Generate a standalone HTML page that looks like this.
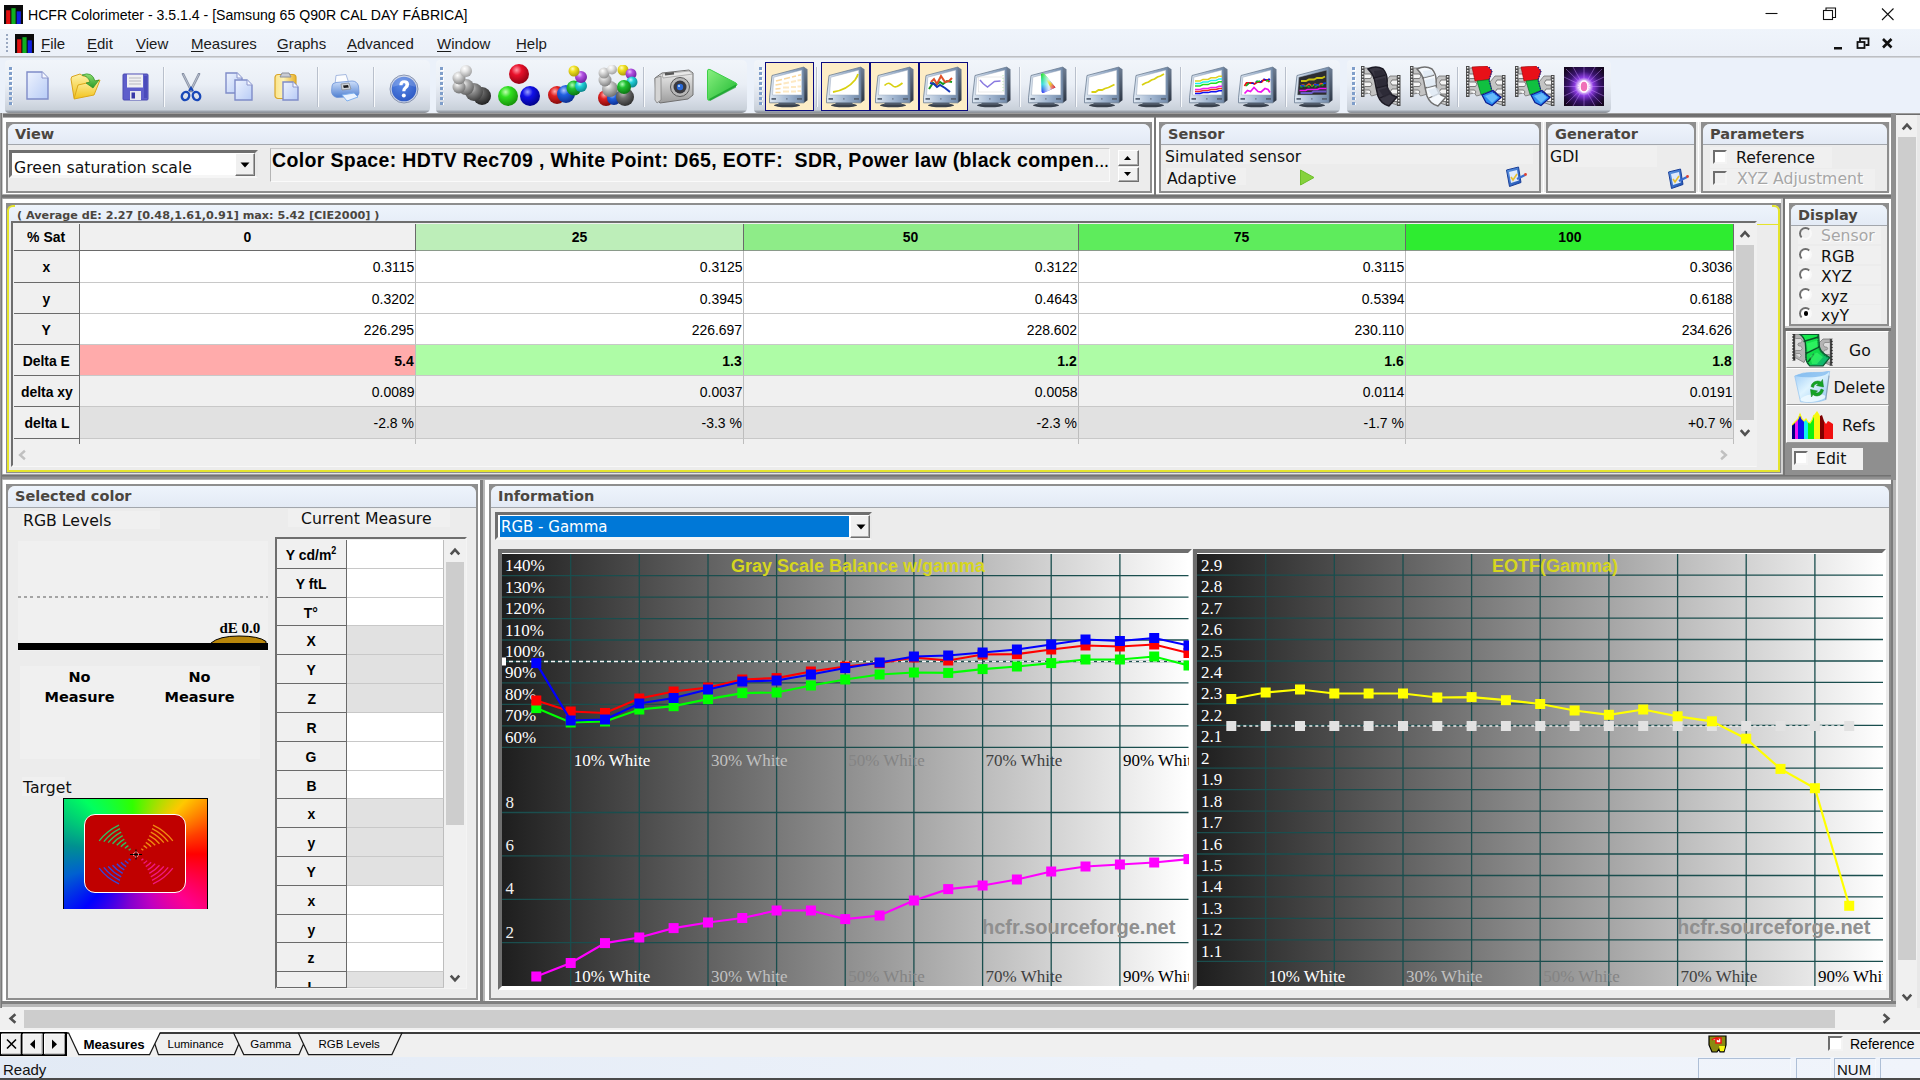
<!DOCTYPE html>
<html lang="en">
<head>
<meta charset="utf-8">
<title>HCFR Colorimeter - 3.5.1.4 - [Samsung 65 Q90R CAL DAY FÁBRICA]</title>
<style>
*{box-sizing:border-box;margin:0;padding:0}
html,body{width:1920px;height:1080px;overflow:hidden;background:#f0f0f0}
body{position:relative;font-family:"Liberation Sans",sans-serif;font-size:15px;color:#000}
.a{position:absolute}
.dv{font-family:"DejaVu Sans","Liberation Sans",sans-serif}
.sx{display:inline-block;transform-origin:0 50%;white-space:nowrap}
u{text-decoration:underline;text-underline-offset:2px}
/* title */
#title{left:0;top:0;width:1920px;height:29px;background:#fff}
#title .t{left:28px;top:5px;font-size:15.5px;line-height:19px;transform:scaleX(.91);transform-origin:0 50%;white-space:nowrap;letter-spacing:0}
/* menu */
#menu{left:0;top:29px;width:1920px;height:27px;background:linear-gradient(#eff4fb,#ebf0f8)}
#menu .m{top:5px;font-size:15px;line-height:19px;white-space:nowrap;color:#1a1a1a}
#menuline{left:0;top:56px;width:1920px;height:2px;background:linear-gradient(#bcbfc4 0 1px,#d2d4d8 1px 2px)}
/* toolbar */
#tbbg{left:0;top:58px;width:1920px;height:55px;background:#ebf1fa}
.band{top:60px;height:53px;border-radius:4px 5px 5px 4px;background:linear-gradient(#f1f5fa 0,#eaeff6 24px,#d6dce6 41px,#c8d0d9 50px,#a0a8b2 51px,#8a8e94 53px)}
.grip{top:66.500px;width:2.500px;height:40px;background:repeating-linear-gradient(#7f9eca 0 2.500px,transparent 2.500px 5px)}
.grip2{top:67.500px;width:2.500px;height:40px;background:repeating-linear-gradient(#fff 0 2.500px,transparent 2.500px 5px)}
.tsep{top:67px;width:2px;height:40px;background:linear-gradient(90deg,#b9c0cc 0 1px,#f8fafc 1px 2px)}
.sel{top:62px;width:49px;height:49px;background:#fdedc6;border:1.500px solid #0a0a80}
#tbline{left:0;top:113px;width:1920px;height:5px;background:linear-gradient(#9c9c9c 0 1px,#6c6c6c 1px,#747474 4px,#b0b0b0 4px 5px)}
/* frames */
.pnl{border:2px solid #8e8e8e;border-right-color:#8e8e8e;background:#ececec;border-radius:7px 7px 0 0}
.pnl .hd{left:0;top:0;right:0;height:20px;background:#e5ecf6;border-bottom:1px solid #9aa0a8;border-radius:5px 5px 0 0}
.pnl .hd span{position:absolute;left:6px;top:1px;font:bold 14.5px/18px "DejaVu Sans","Liberation Sans",sans-serif;color:#4a4540;white-space:nowrap}
.lab{font:15.7px/19px "DejaVu Sans","Liberation Sans",sans-serif;white-space:nowrap;color:#111;margin-top:2px}
.cb{width:14px;height:14px;background:#fff;border:2px solid;border-color:#6e6e6e #f4f4f4 #f4f4f4 #6e6e6e}
.rd{width:13px;height:13px;border-radius:50%;background:#fff;border:2px solid;border-color:#6e6e6e #f8f8f8 #f8f8f8 #6e6e6e}
/* grid */
.g{position:absolute;font-size:15.5px;line-height:32px;white-space:nowrap;overflow:hidden}
.gh{background:#f0f0f0;text-align:center;font-weight:bold;border-right:1px solid #6a6a6a;border-bottom:1px solid #6a6a6a}
.gv{text-align:right;border-right:1px solid #bdbdbd;border-bottom:1px solid #c8c8c8}
.g span{display:inline-block;transform:scaleX(.9)}
.gv span{transform-origin:100% 50%;padding-right:1px}
.gh span{transform-origin:50% 50%}
</style>
</head>
<body>

<div id="title" class="a"><svg class="a" style="left:4px;top:5px" width="19" height="19" viewBox="0 0 18 18"><rect width="18" height="18" fill="#0b0b0b"/><rect x="2" y="5" width="4" height="13" fill="#e01010"/><rect x="7" y="3" width="4" height="15" fill="#10b020"/><rect x="12" y="6" width="4" height="12" fill="#1020e0"/></svg><div class="a t">HCFR Colorimeter - 3.5.1.4 - [Samsung 65 Q90R CAL DAY FÁBRICA]</div>
<svg class="a" style="left:1750px;top:0" width="170" height="29" viewBox="0 0 170 29" fill="none" stroke="#111" stroke-width="1.100"><path d="M15.500 13.500h12"/><rect x="73.500" y="10.500" width="9" height="9"/><path d="M76 10.500v-2.500h9.500v9.500h-3"/><path d="M132 8.500l11.500 11.500M143.500 8.500l-11.500 11.500"/></svg></div>
<div id="menu" class="a">
<div class="a" style="left:6px;top:5px;width:2px;height:18px;background:repeating-linear-gradient(#9aa8c0 0 2px,transparent 2px 4px)"></div>
<svg class="a" style="left:15px;top:5px" width="19" height="19" viewBox="0 0 18 18"><rect width="18" height="18" fill="#0b0b0b"/><rect x="2" y="5" width="4" height="13" fill="#e01010"/><rect x="7" y="3" width="4" height="15" fill="#10b020"/><rect x="12" y="6" width="4" height="12" fill="#1020e0"/></svg>
<div class="a m" style="left:41px"><u>F</u>ile</div>
<div class="a m" style="left:87px"><u>E</u>dit</div>
<div class="a m" style="left:136px"><u>V</u>iew</div>
<div class="a m" style="left:191px"><u>M</u>easures</div>
<div class="a m" style="left:277px"><u>G</u>raphs</div>
<div class="a m" style="left:347px"><u>A</u>dvanced</div>
<div class="a m" style="left:437px"><u>W</u>indow</div>
<div class="a m" style="left:516px"><u>H</u>elp</div>
<svg class="a" style="left:1828px;top:6px" width="70" height="18" viewBox="0 0 70 18"><rect x="6" y="12" width="8" height="2.500" fill="#111"/><g fill="none" stroke="#111" stroke-width="1.800"><rect x="29.500" y="7" width="7" height="6"/><path d="M32 6.500v-3h8.500v6.500h-3"/></g><path d="M55 4l8.500 8.500M63.500 4l-8.500 8.500" stroke="#111" stroke-width="2.600"/></svg>
</div><div id="menuline" class="a"></div>
<div id="tbbg" class="a"></div>
<div class="a band" style="left:5px;width:425px"></div>
<div class="a band" style="left:436px;width:311px"></div>
<div class="a band" style="left:754px;width:586px"></div>
<div class="a band" style="left:1347px;width:264px"></div>
<div class="a grip2" style="left:10px"></div><div class="a grip" style="left:9px"></div>
<div class="a grip2" style="left:441px"></div><div class="a grip" style="left:440px"></div>
<div class="a grip2" style="left:760px"></div><div class="a grip" style="left:759px"></div>
<div class="a grip2" style="left:1353px"></div><div class="a grip" style="left:1352px"></div>
<div class="a tsep" style="left:163px"></div>
<div class="a tsep" style="left:317px"></div>
<div class="a tsep" style="left:373px"></div>
<div class="a tsep" style="left:643px"></div>
<div class="a tsep" style="left:816px"></div>
<div class="a tsep" style="left:1019px"></div>
<div class="a tsep" style="left:1075px"></div>
<div class="a tsep" style="left:1180px"></div>
<div class="a tsep" style="left:1285px"></div>
<div class="a tsep" style="left:1457px"></div>
<div class="a sel" style="left:765px"></div>
<div class="a sel" style="left:821px"></div>
<div class="a sel" style="left:870px"></div>
<div class="a sel" style="left:919px"></div>
<svg class="a" style="left:25.5px;top:70.5px" width="24" height="30" viewBox="0 0 24 30"><defs><linearGradient id="g1" x1="0" y1="0" x2="1" y2="1"><stop offset="0" stop-color="#eef3fe"/><stop offset="1" stop-color="#b7cbf6"/></linearGradient></defs><path d="M1 1h15l6 6v21h-21z" fill="url(#g1)" stroke="#7f8cc8" stroke-width="1.400"/><path d="M16 1v6h6" fill="#f4f7ff" stroke="#8e97cc" stroke-width="1"/></svg>
<svg class="a" style="left:70px;top:72px" width="32" height="30" viewBox="0 0 32 30"><defs><linearGradient id="g2" x1="0" y1="0" x2="0" y2="1"><stop offset="0" stop-color="#fdf2a8"/><stop offset="1" stop-color="#f2c21a"/></linearGradient><linearGradient id="g3" x1="0" y1="0" x2="0" y2="1"><stop offset="0" stop-color="#8fe070"/><stop offset="1" stop-color="#2a9a28"/></linearGradient></defs><path d="M1 7q0-3 3-3l6-2 3 2 9 1 2 4-2 12-18 5z" fill="url(#g2)" stroke="#d9a520" stroke-width="1"/><path d="M4 27l4-14 22-5-6 15z" fill="url(#g2)" stroke="#dba81c" stroke-width="1"/><path d="M12 3q10-4 13 6l4-1-6 8-7-5 4-1q-2-6-8-7z" fill="url(#g3)" stroke="#2f8f2a" stroke-width=".7"/></svg>
<svg class="a" style="left:122px;top:73px" width="28" height="29" viewBox="0 0 28 29"><path d="M1 2q0-1 1-1h23q1 0 1 1v24q0 1-1 1h-23q-1 0-1-1z" fill="#5e5ecb" stroke="#4a4ab0" stroke-width="1"/><rect x="5" y="1.5" width="16" height="13" fill="#f0f0f2"/><path d="M7 5h12M7 8h12M7 11h12" stroke="#b8b8c0" stroke-width="1"/><rect x="8" y="18" width="11" height="9" fill="#e9e9ee"/><rect x="9.5" y="19.5" width="3.5" height="6" fill="#3a3aa8"/><rect x="22" y="3" width="3" height="22" fill="#3f3fb0" opacity=".6"/></svg>
<svg class="a" style="left:180px;top:73px" width="22" height="29" viewBox="0 0 22 29"><path d="M3 1l8.5 17M19 1l-8.5 17" stroke="#8690a4" stroke-width="2.600" stroke-linecap="round"/><path d="M3.300 1.500l8 16M18.700 1.500l-8 16" stroke="#c6ccd8" stroke-width=".8" stroke-linecap="round"/><ellipse cx="5.5" cy="23" rx="3.6" ry="4.2" fill="none" stroke="#1848b8" stroke-width="2.4" transform="rotate(25 5.5 23)"/><ellipse cx="16.5" cy="23" rx="3.6" ry="4.2" fill="none" stroke="#1848b8" stroke-width="2.4" transform="rotate(-25 16.5 23)"/><path d="M9 18l2-3 2 3" stroke="#1848b8" stroke-width="2.2" fill="none"/></svg>
<svg class="a" style="left:225px;top:72px" width="29" height="30" viewBox="0 0 29 30"><defs><linearGradient id="g4" x1="0" y1="0" x2="1" y2="1"><stop offset="0" stop-color="#eef3fe"/><stop offset="1" stop-color="#b7cbf6"/></linearGradient></defs><path d="M1 1h11l5 5v15h-16z" fill="url(#g4)" stroke="#7f8cc8" stroke-width="1.400"/><path d="M12 1v5h5" fill="#f4f7ff" stroke="#8e97cc" stroke-width="1"/><defs><linearGradient id="g5" x1="0" y1="0" x2="1" y2="1"><stop offset="0" stop-color="#eef3fe"/><stop offset="1" stop-color="#b7cbf6"/></linearGradient></defs><path d="M10 8h12l5 5v15h-17z" fill="url(#g5)" stroke="#7f8cc8" stroke-width="1.400"/><path d="M22 8v5h5" fill="#f4f7ff" stroke="#8e97cc" stroke-width="1"/></svg>
<svg class="a" style="left:274px;top:72px" width="27" height="30" viewBox="0 0 27 30"><defs><linearGradient id="g6" x1="0" y1="0" x2="1" y2="0"><stop offset="0" stop-color="#fbe48a"/><stop offset=".4" stop-color="#fdf2b8"/><stop offset="1" stop-color="#e8b22a"/></linearGradient></defs><rect x="1" y="2.5" width="21" height="24" rx="3" fill="url(#g6)" stroke="#d8a528" stroke-width="1.2"/><path d="M6 5l2-4h7l2 4z" fill="#c9ccd4" stroke="#8c909c" stroke-width="1"/><defs><linearGradient id="g7" x1="0" y1="0" x2="1" y2="1"><stop offset="0" stop-color="#eef3fe"/><stop offset="1" stop-color="#b7cbf6"/></linearGradient></defs><path d="M9 10h10l5 5v13h-15z" fill="url(#g7)" stroke="#7f8cc8" stroke-width="1.400"/><path d="M19 10v5h5" fill="#f4f7ff" stroke="#8e97cc" stroke-width="1"/></svg>
<svg class="a" style="left:329.5px;top:73.5px" width="30" height="28" viewBox="0 0 30 28"><defs><linearGradient id="g8" x1="0" y1="0" x2="0" y2="1"><stop offset="0" stop-color="#cfe0fb"/><stop offset="1" stop-color="#4f7fd0"/></linearGradient></defs><path d="M6 1.5l10-1 3 9-14 1z" fill="#fbfcfe" stroke="#9db2dc" stroke-width=".9"/><path d="M2 12q0-3 4-3.500l16-1.500q5 0 6.500 5l.5 7q0 3-4 3.500l-18 1q-5-1-5.500-6z" fill="url(#g8)" stroke="#6e94d8" stroke-width=".8"/><path d="M11 10l8-1 2 6-9 1z" fill="#d0d4da" stroke="#8a8e96" stroke-width=".8"/><path d="M13 11.500l5-.5.800 2.500-5 .5z" fill="#1a1a1e"/><path d="M12 21l12-2 4 4-11 4z" fill="#eaf3ff" stroke="#7fb0ee" stroke-width="1"/></svg>
<svg class="a" style="left:388.5px;top:74px" width="30" height="30" viewBox="0 0 30 30"><defs><radialGradient id="g9" cx=".4" cy=".3" r=".8"><stop offset="0" stop-color="#5a8ae8"/><stop offset="1" stop-color="#2a55c0"/></radialGradient></defs><circle cx="15" cy="15" r="14" fill="#c9d2e6" stroke="#8894b0" stroke-width="1"/><circle cx="15" cy="15" r="12.300" fill="url(#g9)"/><path d="M3.500 13a11.500 11.500 0 0 1 23 0q-11-5-23 0z" fill="#fff" opacity=".18"/><path d="M10.300 11.200q.2-5 5-5 4.800 0 4.800 4.300 0 2.600-2.400 4.200-1.300.9-1.300 2.600h-3.200q0-3 1.800-4.400 1.500-1.100 1.500-2.300 0-1.500-1.400-1.500-1.500 0-1.600 2.100z" fill="#fff"/><circle cx="14.800" cy="21.500" r="2" fill="#fff"/></svg>
<svg class="a" style="left:449px;top:65px" width="43" height="42" viewBox="0 0 43 42"><defs><radialGradient id="g10" cx=".38" cy=".3" r=".75"><stop offset="0" stop-color="#9a9a9a"/><stop offset=".35" stop-color="#5a5a5a"/><stop offset="1" stop-color="#1c1c1c"/></radialGradient></defs><circle cx="33" cy="31" r="9" fill="url(#g10)"/><defs><radialGradient id="g11" cx=".38" cy=".3" r=".75"><stop offset="0" stop-color="#d0d0d0"/><stop offset=".35" stop-color="#8a8a8a"/><stop offset="1" stop-color="#3a3a3a"/></radialGradient></defs><circle cx="25" cy="27" r="9" fill="url(#g11)"/><defs><radialGradient id="g12" cx=".38" cy=".3" r=".75"><stop offset="0" stop-color="#f0f0f0"/><stop offset=".35" stop-color="#b0b0b0"/><stop offset="1" stop-color="#5a5a5a"/></radialGradient></defs><circle cx="17" cy="22" r="8" fill="url(#g12)"/><defs><radialGradient id="g13" cx=".38" cy=".3" r=".75"><stop offset="0" stop-color="#fff"/><stop offset=".35" stop-color="#c4c4c4"/><stop offset="1" stop-color="#6a6a6a"/></radialGradient></defs><circle cx="10" cy="22" r="6.5" fill="url(#g13)"/><defs><radialGradient id="g14" cx=".38" cy=".3" r=".75"><stop offset="0" stop-color="#fff"/><stop offset=".35" stop-color="#d4d4d4"/><stop offset="1" stop-color="#7a7a7a"/></radialGradient></defs><circle cx="10" cy="13" r="6.5" fill="url(#g14)"/><defs><radialGradient id="g15" cx=".38" cy=".3" r=".75"><stop offset="0" stop-color="#fff"/><stop offset=".35" stop-color="#e6e6e6"/><stop offset="1" stop-color="#9a9a9a"/></radialGradient></defs><circle cx="17" cy="6" r="6" fill="url(#g15)"/></svg>
<svg class="a" style="left:497px;top:64px" width="44" height="43" viewBox="0 0 44 43"><defs><radialGradient id="g16" cx=".38" cy=".3" r=".75"><stop offset="0" stop-color="#ff9aa8"/><stop offset=".35" stop-color="#e8102a"/><stop offset="1" stop-color="#8a0010"/></radialGradient></defs><circle cx="22" cy="10" r="10" fill="url(#g16)"/><defs><radialGradient id="g17" cx=".38" cy=".3" r=".75"><stop offset="0" stop-color="#c0ffb0"/><stop offset=".35" stop-color="#30e020"/><stop offset="1" stop-color="#148a08"/></radialGradient></defs><circle cx="11" cy="32" r="10" fill="url(#g17)"/><defs><radialGradient id="g18" cx=".38" cy=".3" r=".75"><stop offset="0" stop-color="#9aa0ff"/><stop offset=".35" stop-color="#1010e8"/><stop offset="1" stop-color="#000080"/></radialGradient></defs><circle cx="33" cy="32" r="10" fill="url(#g18)"/></svg>
<svg class="a" style="left:547px;top:65px" width="42" height="42" viewBox="0 0 42 42"><defs><radialGradient id="g19" cx=".38" cy=".3" r=".75"><stop offset="0" stop-color="#ffb0b0"/><stop offset=".35" stop-color="#e02020"/><stop offset="1" stop-color="#7a0808"/></radialGradient></defs><circle cx="10" cy="30" r="9" fill="url(#g19)"/><defs><radialGradient id="g20" cx=".38" cy=".3" r=".75"><stop offset="0" stop-color="#b0c8ff"/><stop offset=".35" stop-color="#2060e0"/><stop offset="1" stop-color="#0a2a8a"/></radialGradient></defs><circle cx="19" cy="29" r="9" fill="url(#g20)"/><defs><radialGradient id="g21" cx=".38" cy=".3" r=".75"><stop offset="0" stop-color="#b0ffb8"/><stop offset=".35" stop-color="#20c030"/><stop offset="1" stop-color="#0a7010"/></radialGradient></defs><circle cx="27" cy="23" r="7.5" fill="url(#g21)"/><defs><radialGradient id="g22" cx=".38" cy=".3" r=".75"><stop offset="0" stop-color="#c0ffff"/><stop offset=".35" stop-color="#20d0d8"/><stop offset="1" stop-color="#0a8088"/></radialGradient></defs><circle cx="34" cy="21" r="6" fill="url(#g22)"/><defs><radialGradient id="g23" cx=".38" cy=".3" r=".75"><stop offset="0" stop-color="#ecc0ff"/><stop offset=".35" stop-color="#b050e0"/><stop offset="1" stop-color="#6a1a98"/></radialGradient></defs><circle cx="34" cy="12" r="6" fill="url(#g23)"/><defs><radialGradient id="g24" cx=".38" cy=".3" r=".75"><stop offset="0" stop-color="#fffbc0"/><stop offset=".35" stop-color="#f0e020"/><stop offset="1" stop-color="#a89808"/></radialGradient></defs><circle cx="27" cy="6" r="5.5" fill="url(#g24)"/></svg>
<svg class="a" style="left:595px;top:65px" width="44" height="42" viewBox="0 0 44 42"><defs><radialGradient id="g25" cx=".38" cy=".3" r=".75"><stop offset="0" stop-color="#ffb0b0"/><stop offset=".35" stop-color="#e02020"/><stop offset="1" stop-color="#7a0808"/></radialGradient></defs><circle cx="11" cy="33" r="8" fill="url(#g25)"/><defs><radialGradient id="g26" cx=".38" cy=".3" r=".75"><stop offset="0" stop-color="#b0c8ff"/><stop offset=".35" stop-color="#2060e0"/><stop offset="1" stop-color="#0a2a8a"/></radialGradient></defs><circle cx="19" cy="33" r="7" fill="url(#g26)"/><defs><radialGradient id="g27" cx=".38" cy=".3" r=".75"><stop offset="0" stop-color="#c0c0c0"/><stop offset=".35" stop-color="#707070"/><stop offset="1" stop-color="#2a2a2a"/></radialGradient></defs><circle cx="30" cy="32" r="9" fill="url(#g27)"/><defs><radialGradient id="g28" cx=".38" cy=".3" r=".75"><stop offset="0" stop-color="#fff"/><stop offset=".35" stop-color="#c0c0c0"/><stop offset="1" stop-color="#6a6a6a"/></radialGradient></defs><circle cx="15" cy="24" r="8" fill="url(#g28)"/><defs><radialGradient id="g29" cx=".38" cy=".3" r=".75"><stop offset="0" stop-color="#fff"/><stop offset=".35" stop-color="#cfcfcf"/><stop offset="1" stop-color="#7a7a7a"/></radialGradient></defs><circle cx="10" cy="15" r="6.5" fill="url(#g29)"/><defs><radialGradient id="g30" cx=".38" cy=".3" r=".75"><stop offset="0" stop-color="#fff"/><stop offset=".35" stop-color="#d8d8d8"/><stop offset="1" stop-color="#8a8a8a"/></radialGradient></defs><circle cx="9" cy="8" r="5.5" fill="url(#g30)"/><defs><radialGradient id="g31" cx=".38" cy=".3" r=".75"><stop offset="0" stop-color="#fff"/><stop offset=".35" stop-color="#e6e6e6"/><stop offset="1" stop-color="#9a9a9a"/></radialGradient></defs><circle cx="17" cy="4.5" r="5" fill="url(#g31)"/><defs><radialGradient id="g32" cx=".38" cy=".3" r=".75"><stop offset="0" stop-color="#fffbc0"/><stop offset=".35" stop-color="#f0e020"/><stop offset="1" stop-color="#a89808"/></radialGradient></defs><circle cx="28" cy="5" r="5.5" fill="url(#g32)"/><defs><radialGradient id="g33" cx=".38" cy=".3" r=".75"><stop offset="0" stop-color="#ecc0ff"/><stop offset=".35" stop-color="#b050e0"/><stop offset="1" stop-color="#6a1a98"/></radialGradient></defs><circle cx="36" cy="9" r="5.5" fill="url(#g33)"/><defs><radialGradient id="g34" cx=".38" cy=".3" r=".75"><stop offset="0" stop-color="#c0ffff"/><stop offset=".35" stop-color="#20d0d8"/><stop offset="1" stop-color="#0a8088"/></radialGradient></defs><circle cx="37" cy="17" r="5.5" fill="url(#g34)"/><defs><radialGradient id="g35" cx=".38" cy=".3" r=".75"><stop offset="0" stop-color="#b0ffb8"/><stop offset=".35" stop-color="#20c030"/><stop offset="1" stop-color="#0a7010"/></radialGradient></defs><circle cx="29" cy="22" r="7" fill="url(#g35)"/></svg>
<svg class="a" style="left:651.5px;top:69px" width="42" height="35" viewBox="0 0 42 35"><defs><linearGradient id="g36" x1="0" y1="0" x2="0" y2="1"><stop offset="0" stop-color="#f2f2f2"/><stop offset="1" stop-color="#9c9c9c"/></linearGradient></defs><path d="M3 9l7-5 27-3 4 3v22l-5 4-28 4-4-4z" fill="url(#g36)" stroke="#707070" stroke-width="1"/><path d="M3 9l6-2v24l-4 3-2-3z" fill="#d4d4d4" stroke="#808080" stroke-width=".8"/><path d="M10 5l27-3 4 3-30 4z" fill="#e8e8e8" stroke="#8a8a8a" stroke-width=".6"/><rect x="13" y="3.500" width="9" height="2.500" fill="#555" transform="rotate(-6 17 5)"/><circle cx="28" cy="18" r="9.500" fill="#b8b8b8" stroke="#5a5a5a" stroke-width="1"/><circle cx="28" cy="18" r="6.500" fill="#3a3a40"/><circle cx="28" cy="18" r="3.200" fill="#2a6ad8"/><circle cx="27" cy="17" r="1.100" fill="#bfe0ff"/></svg>
<svg class="a" style="left:706px;top:68px" width="33" height="35" viewBox="0 0 33 35"><defs><linearGradient id="g37" x1="0" y1="0" x2="1" y2="1"><stop offset="0" stop-color="#8af080"/><stop offset="1" stop-color="#1cb830"/></linearGradient></defs><path d="M1.500 3q0-2.500 2.500-1.500l26 13.500q2 1.500 0 3l-26 14q-2.500 1-2.500-1.500z" fill="url(#g37)" stroke="#3ccf48" stroke-width="1"/><path d="M3 31l27-14.500v3l-26 13.500z" fill="#14982a" opacity=".7"/></svg>
<svg class="a" style="left:769px;top:66px" width="40" height="42" viewBox="0 0 40 42"><defs><linearGradient id="g41" x1="0" y1="0" x2="1" y2="0"><stop offset="0" stop-color="#dfe8f2"/><stop offset=".55" stop-color="#9fb4cf"/><stop offset="1" stop-color="#7189a8"/></linearGradient><linearGradient id="g42" x1="0" y1="0" x2="0" y2="1"><stop offset="0" stop-color="#6f7f95"/><stop offset="1" stop-color="#2b3442"/></linearGradient></defs><ellipse cx="18" cy="39.300" rx="13" ry="2" fill="#39414d"/><path d="M11 35h14l2.500 4h-19z" fill="#4b5563"/><path d="M35 1l3.500 2.300v31l-3.500 2.500z" fill="url(#g42)"/><path d="M3 9.500l32-8.500v35.800h-34.500v-5z" fill="url(#g41)" stroke="#6b7c92" stroke-width=".8"/><path d="M4.800 11.200l28-7.200v25h-29.300z" fill="#ffffff" stroke="#9aa9bd" stroke-width=".5"/><rect x="2.500" y="32" width="4.500" height="1.800" fill="#5a6678"/><rect x="28" y="32" width="5" height="1.800" fill="#5a6678"/><rect x="17" y="32.300" width="1.600" height="1.200" fill="#6a7688"/><g stroke="#fbd9a0" stroke-width="1.600" fill="none"><path d="M7 15l6-1.500M15 13l6-1.500M23 11l4-1M29 9.500l3-.8"/><path d="M6.500 19l6-1M6.500 23l5-.5M6.500 26.500h5"/></g><g stroke="#fde9c4" stroke-width="2.200" fill="none"><path d="M14.500 17.500l5.500-1M22 16l5-1M28.500 14.500l3.500-.5M14 21.500h6M22 21h5M28.500 20.500h3.500M14 25.500h6M22 25.500h5M28.500 25h3.500"/></g></svg>
<svg class="a" style="left:825.5px;top:66px" width="40" height="42" viewBox="0 0 40 42"><defs><linearGradient id="g43" x1="0" y1="0" x2="1" y2="0"><stop offset="0" stop-color="#dfe8f2"/><stop offset=".55" stop-color="#9fb4cf"/><stop offset="1" stop-color="#7189a8"/></linearGradient><linearGradient id="g44" x1="0" y1="0" x2="0" y2="1"><stop offset="0" stop-color="#6f7f95"/><stop offset="1" stop-color="#2b3442"/></linearGradient></defs><ellipse cx="18" cy="39.300" rx="13" ry="2" fill="#39414d"/><path d="M11 35h14l2.500 4h-19z" fill="#4b5563"/><path d="M35 1l3.500 2.300v31l-3.500 2.500z" fill="url(#g44)"/><path d="M3 9.500l32-8.500v35.800h-34.500v-5z" fill="url(#g43)" stroke="#6b7c92" stroke-width=".8"/><path d="M4.800 11.200l28-7.200v25h-29.300z" fill="#ffffff" stroke="#9aa9bd" stroke-width=".5"/><rect x="2.500" y="32" width="4.500" height="1.800" fill="#5a6678"/><rect x="28" y="32" width="5" height="1.800" fill="#5a6678"/><rect x="17" y="32.300" width="1.600" height="1.200" fill="#6a7688"/><path d="M7 26q14-2 22-12 2.500-3.500 3-6" stroke="#d8d010" stroke-width="1.800" fill="none"/></svg>
<svg class="a" style="left:874.5px;top:66px" width="40" height="42" viewBox="0 0 40 42"><defs><linearGradient id="g45" x1="0" y1="0" x2="1" y2="0"><stop offset="0" stop-color="#dfe8f2"/><stop offset=".55" stop-color="#9fb4cf"/><stop offset="1" stop-color="#7189a8"/></linearGradient><linearGradient id="g46" x1="0" y1="0" x2="0" y2="1"><stop offset="0" stop-color="#6f7f95"/><stop offset="1" stop-color="#2b3442"/></linearGradient></defs><ellipse cx="18" cy="39.300" rx="13" ry="2" fill="#39414d"/><path d="M11 35h14l2.500 4h-19z" fill="#4b5563"/><path d="M35 1l3.500 2.300v31l-3.500 2.500z" fill="url(#g46)"/><path d="M3 9.500l32-8.500v35.800h-34.500v-5z" fill="url(#g45)" stroke="#6b7c92" stroke-width=".8"/><path d="M4.800 11.200l28-7.200v25h-29.300z" fill="#ffffff" stroke="#9aa9bd" stroke-width=".5"/><rect x="2.500" y="32" width="4.500" height="1.800" fill="#5a6678"/><rect x="28" y="32" width="5" height="1.800" fill="#5a6678"/><rect x="17" y="32.300" width="1.600" height="1.200" fill="#6a7688"/><path d="M9.500 19.500q3-3 5-2t3.500 2.500 4 .5 5.500-3.500" stroke="#d8d010" stroke-width="1.700" fill="none"/></svg>
<svg class="a" style="left:923px;top:66px" width="40" height="42" viewBox="0 0 40 42"><defs><linearGradient id="g47" x1="0" y1="0" x2="1" y2="0"><stop offset="0" stop-color="#dfe8f2"/><stop offset=".55" stop-color="#9fb4cf"/><stop offset="1" stop-color="#7189a8"/></linearGradient><linearGradient id="g48" x1="0" y1="0" x2="0" y2="1"><stop offset="0" stop-color="#6f7f95"/><stop offset="1" stop-color="#2b3442"/></linearGradient></defs><ellipse cx="18" cy="39.300" rx="13" ry="2" fill="#39414d"/><path d="M11 35h14l2.500 4h-19z" fill="#4b5563"/><path d="M35 1l3.500 2.300v31l-3.500 2.500z" fill="url(#g48)"/><path d="M3 9.500l32-8.500v35.800h-34.500v-5z" fill="url(#g47)" stroke="#6b7c92" stroke-width=".8"/><path d="M4.800 11.200l28-7.200v25h-29.300z" fill="#ffffff" stroke="#9aa9bd" stroke-width=".5"/><rect x="2.500" y="32" width="4.500" height="1.800" fill="#5a6678"/><rect x="28" y="32" width="5" height="1.800" fill="#5a6678"/><rect x="17" y="32.300" width="1.600" height="1.200" fill="#6a7688"/><path d="M6 23l4-6 3 2 4-3 3 2 4-3 5 1" stroke="#18981c" stroke-width="2" fill="none"/><path d="M8 16l3-3 3 5 4-8 4 6 4-1 3-3" stroke="#e05028" stroke-width="2" fill="none"/><path d="M7 17l4 1 3 3 3-2 5 3 5 4" stroke="#1838b8" stroke-width="2" fill="none"/></svg>
<svg class="a" style="left:971.5px;top:66px" width="40" height="42" viewBox="0 0 40 42"><defs><linearGradient id="g49" x1="0" y1="0" x2="1" y2="0"><stop offset="0" stop-color="#dfe8f2"/><stop offset=".55" stop-color="#9fb4cf"/><stop offset="1" stop-color="#7189a8"/></linearGradient><linearGradient id="g50" x1="0" y1="0" x2="0" y2="1"><stop offset="0" stop-color="#6f7f95"/><stop offset="1" stop-color="#2b3442"/></linearGradient></defs><ellipse cx="18" cy="39.300" rx="13" ry="2" fill="#39414d"/><path d="M11 35h14l2.500 4h-19z" fill="#4b5563"/><path d="M35 1l3.500 2.300v31l-3.500 2.500z" fill="url(#g50)"/><path d="M3 9.500l32-8.500v35.800h-34.500v-5z" fill="url(#g49)" stroke="#6b7c92" stroke-width=".8"/><path d="M4.800 11.200l28-7.200v25h-29.300z" fill="#ffffff" stroke="#9aa9bd" stroke-width=".5"/><rect x="2.500" y="32" width="4.500" height="1.800" fill="#5a6678"/><rect x="28" y="32" width="5" height="1.800" fill="#5a6678"/><rect x="17" y="32.300" width="1.600" height="1.200" fill="#6a7688"/><rect x="6.500" y="11" width="25" height="15" fill="none" stroke="#dcdcdc" stroke-width=".6"/><path d="M8 14l3 3.500 4.500 3.500 7-5.500 6-.5" stroke="#8a7ae0" stroke-width="1.500" fill="none"/><path d="M31 9v17" stroke="#b6e8b0" stroke-width="1" stroke-dasharray="1 2"/></svg>
<svg class="a" style="left:1027.5px;top:66px" width="40" height="42" viewBox="0 0 40 42"><defs><linearGradient id="g51" x1="0" y1="0" x2="1" y2="0"><stop offset="0" stop-color="#dfe8f2"/><stop offset=".55" stop-color="#9fb4cf"/><stop offset="1" stop-color="#7189a8"/></linearGradient><linearGradient id="g52" x1="0" y1="0" x2="0" y2="1"><stop offset="0" stop-color="#6f7f95"/><stop offset="1" stop-color="#2b3442"/></linearGradient></defs><ellipse cx="18" cy="39.300" rx="13" ry="2" fill="#39414d"/><path d="M11 35h14l2.500 4h-19z" fill="#4b5563"/><path d="M35 1l3.500 2.300v31l-3.500 2.500z" fill="url(#g52)"/><path d="M3 9.500l32-8.500v35.800h-34.500v-5z" fill="url(#g51)" stroke="#6b7c92" stroke-width=".8"/><path d="M4.800 11.200l28-7.200v25h-29.300z" fill="#ffffff" stroke="#9aa9bd" stroke-width=".5"/><rect x="2.500" y="32" width="4.500" height="1.800" fill="#5a6678"/><rect x="28" y="32" width="5" height="1.800" fill="#5a6678"/><rect x="17" y="32.300" width="1.600" height="1.200" fill="#6a7688"/><defs><linearGradient id="g38" x1="0" y1="0" x2="0" y2="1"><stop offset="0" stop-color="#18e018"/><stop offset=".55" stop-color="#18d8d8"/><stop offset="1" stop-color="#1010f0"/></linearGradient><linearGradient id="g39" x1="0" y1="0" x2="1" y2="0"><stop offset="0" stop-color="#fff" stop-opacity="0"/><stop offset=".55" stop-color="#fff" stop-opacity=".85"/><stop offset="1" stop-color="#f01010"/></linearGradient><linearGradient id="g40" x1="0" y1="0" x2="1" y2="1"><stop offset=".3" stop-color="#e8e020" stop-opacity="0"/><stop offset=".6" stop-color="#e8e020"/><stop offset=".9" stop-color="#f01010" stop-opacity="0"/></linearGradient></defs><path d="M13 8q2.500-1.500 4 .5l10.500 13-12 5.500q-1.500.5-2-1.500z" fill="url(#g38)"/><path d="M13 8q2.500-1.500 4 .5l10.500 13-12 5.500q-1.500.5-2-1.500z" fill="url(#g39)"/><path d="M15 8.500l12.500 13-4 1.500z" fill="url(#g40)"/></svg>
<svg class="a" style="left:1084px;top:66px" width="40" height="42" viewBox="0 0 40 42"><defs><linearGradient id="g53" x1="0" y1="0" x2="1" y2="0"><stop offset="0" stop-color="#dfe8f2"/><stop offset=".55" stop-color="#9fb4cf"/><stop offset="1" stop-color="#7189a8"/></linearGradient><linearGradient id="g54" x1="0" y1="0" x2="0" y2="1"><stop offset="0" stop-color="#6f7f95"/><stop offset="1" stop-color="#2b3442"/></linearGradient></defs><ellipse cx="18" cy="39.300" rx="13" ry="2" fill="#39414d"/><path d="M11 35h14l2.500 4h-19z" fill="#4b5563"/><path d="M35 1l3.500 2.300v31l-3.500 2.500z" fill="url(#g54)"/><path d="M3 9.500l32-8.500v35.800h-34.500v-5z" fill="url(#g53)" stroke="#6b7c92" stroke-width=".8"/><path d="M4.800 11.200l28-7.200v25h-29.300z" fill="#ffffff" stroke="#9aa9bd" stroke-width=".5"/><rect x="2.500" y="32" width="4.500" height="1.800" fill="#5a6678"/><rect x="28" y="32" width="5" height="1.800" fill="#5a6678"/><rect x="17" y="32.300" width="1.600" height="1.200" fill="#6a7688"/><path d="M7.500 26h4l3-2h3.500l3-1.500 3.500-1 3-1.500 3-1.500" stroke="#d8d010" stroke-width="1.800" fill="none"/></svg>
<svg class="a" style="left:1132.5px;top:66px" width="40" height="42" viewBox="0 0 40 42"><defs><linearGradient id="g55" x1="0" y1="0" x2="1" y2="0"><stop offset="0" stop-color="#dfe8f2"/><stop offset=".55" stop-color="#9fb4cf"/><stop offset="1" stop-color="#7189a8"/></linearGradient><linearGradient id="g56" x1="0" y1="0" x2="0" y2="1"><stop offset="0" stop-color="#6f7f95"/><stop offset="1" stop-color="#2b3442"/></linearGradient></defs><ellipse cx="18" cy="39.300" rx="13" ry="2" fill="#39414d"/><path d="M11 35h14l2.500 4h-19z" fill="#4b5563"/><path d="M35 1l3.500 2.300v31l-3.500 2.500z" fill="url(#g56)"/><path d="M3 9.500l32-8.500v35.800h-34.500v-5z" fill="url(#g55)" stroke="#6b7c92" stroke-width=".8"/><path d="M4.800 11.200l28-7.200v25h-29.300z" fill="#ffffff" stroke="#9aa9bd" stroke-width=".5"/><rect x="2.500" y="32" width="4.500" height="1.800" fill="#5a6678"/><rect x="28" y="32" width="5" height="1.800" fill="#5a6678"/><rect x="17" y="32.300" width="1.600" height="1.200" fill="#6a7688"/><path d="M9 19l3.500-2 3-1 3-2 3-1 3-2 3-1 3.500-2" stroke="#d8d010" stroke-width="1.800" fill="none"/></svg>
<svg class="a" style="left:1189px;top:66px" width="40" height="42" viewBox="0 0 40 42"><defs><linearGradient id="g57" x1="0" y1="0" x2="1" y2="0"><stop offset="0" stop-color="#dfe8f2"/><stop offset=".55" stop-color="#9fb4cf"/><stop offset="1" stop-color="#7189a8"/></linearGradient><linearGradient id="g58" x1="0" y1="0" x2="0" y2="1"><stop offset="0" stop-color="#6f7f95"/><stop offset="1" stop-color="#2b3442"/></linearGradient></defs><ellipse cx="18" cy="39.300" rx="13" ry="2" fill="#39414d"/><path d="M11 35h14l2.500 4h-19z" fill="#4b5563"/><path d="M35 1l3.500 2.300v31l-3.500 2.500z" fill="url(#g58)"/><path d="M3 9.500l32-8.500v35.800h-34.500v-5z" fill="url(#g57)" stroke="#6b7c92" stroke-width=".8"/><path d="M4.800 11.200l28-7.200v25h-29.300z" fill="#ffffff" stroke="#9aa9bd" stroke-width=".5"/><rect x="2.500" y="32" width="4.500" height="1.800" fill="#5a6678"/><rect x="28" y="32" width="5" height="1.800" fill="#5a6678"/><rect x="17" y="32.300" width="1.600" height="1.200" fill="#6a7688"/><path d="M6 15h5l3-1.625h5l3-1.625h5l3-1.625h3" stroke="#e0d020" stroke-width="1.500" fill="none"/><path d="M6 17.5h5l3-1.525h5l3-1.525h5l3-1.525h3" stroke="#20f0f0" stroke-width="1.500" fill="none"/><path d="M6 20h5l3-1.425h5l3-1.425h5l3-1.425h3" stroke="#20e020" stroke-width="1.500" fill="none"/><path d="M6 23.5h5l3-1.05h5l3-1.05h5l3-1.05h3" stroke="#f020f0" stroke-width="1.500" fill="none"/><path d="M6 25.5h5l3-0.975h5l3-0.975h5l3-0.975h3" stroke="#f03020" stroke-width="1.500" fill="none"/><path d="M6 27.5h5l3-0.9h5l3-0.9h5l3-0.9h3" stroke="#1010f0" stroke-width="1.500" fill="none"/></svg>
<svg class="a" style="left:1238px;top:66px" width="40" height="42" viewBox="0 0 40 42"><defs><linearGradient id="g59" x1="0" y1="0" x2="1" y2="0"><stop offset="0" stop-color="#dfe8f2"/><stop offset=".55" stop-color="#9fb4cf"/><stop offset="1" stop-color="#7189a8"/></linearGradient><linearGradient id="g60" x1="0" y1="0" x2="0" y2="1"><stop offset="0" stop-color="#6f7f95"/><stop offset="1" stop-color="#2b3442"/></linearGradient></defs><ellipse cx="18" cy="39.300" rx="13" ry="2" fill="#39414d"/><path d="M11 35h14l2.500 4h-19z" fill="#4b5563"/><path d="M35 1l3.500 2.300v31l-3.500 2.500z" fill="url(#g60)"/><path d="M3 9.500l32-8.500v35.800h-34.500v-5z" fill="url(#g59)" stroke="#6b7c92" stroke-width=".8"/><path d="M4.800 11.200l28-7.200v25h-29.300z" fill="#ffffff" stroke="#9aa9bd" stroke-width=".5"/><rect x="2.500" y="32" width="4.500" height="1.800" fill="#5a6678"/><rect x="28" y="32" width="5" height="1.800" fill="#5a6678"/><rect x="17" y="32.300" width="1.600" height="1.200" fill="#6a7688"/><path d="M6.500 20l2-3h6l2 1 3-2h4l2-2h4l2 2" stroke="#f01010" stroke-width="1.800" fill="none"/><path d="M9 19l2-2 5 .5 3-2.500 3 1.500 4-3.500 3 1.500 2-1.500 1.500 2" stroke="#1010e0" stroke-width="1.300" fill="none" stroke-dasharray="3 2"/><path d="M8 20l3-3M18 16l4-1M28 15l3-.5" stroke="#10c010" stroke-width="1.500" fill="none"/><path d="M6.500 27.500l3-3 3 1 3.500-4 4 4 3 .5 4-3.500 3 1 2 3" stroke="#f010f0" stroke-width="1.700" fill="none"/></svg>
<svg class="a" style="left:1294px;top:66px" width="40" height="42" viewBox="0 0 40 42"><defs><linearGradient id="g61" x1="0" y1="0" x2="1" y2="0"><stop offset="0" stop-color="#dfe8f2"/><stop offset=".55" stop-color="#9fb4cf"/><stop offset="1" stop-color="#7189a8"/></linearGradient><linearGradient id="g62" x1="0" y1="0" x2="0" y2="1"><stop offset="0" stop-color="#6f7f95"/><stop offset="1" stop-color="#2b3442"/></linearGradient></defs><ellipse cx="18" cy="39.300" rx="13" ry="2" fill="#39414d"/><path d="M11 35h14l2.500 4h-19z" fill="#4b5563"/><path d="M35 1l3.500 2.300v31l-3.500 2.500z" fill="url(#g62)"/><path d="M3 9.500l32-8.500v35.800h-34.500v-5z" fill="url(#g61)" stroke="#6b7c92" stroke-width=".8"/><path d="M4.800 11.200l28-7.200v25h-29.300z" fill="#2c2c30" stroke="#9aa9bd" stroke-width=".5"/><rect x="2.500" y="32" width="4.500" height="1.800" fill="#5a6678"/><rect x="28" y="32" width="5" height="1.800" fill="#5a6678"/><rect x="17" y="32.300" width="1.600" height="1.200" fill="#6a7688"/><path d="M7 15h5l3-1.500h5l3-1.500h5l3-1.500" stroke="#c8c010" stroke-width="1.800" fill="none"/><path d="M6 20l3-1 3 1 3-2 3 2 3-2 3 1.500 3-2 3 .5" stroke="#f06020" stroke-width="1.500" fill="none"/><path d="M6 20.500l3 .5 3-1.500 3 1.500 3-1.500 3 1.500 3-2 3 1 3-2" stroke="#10b020" stroke-width="1.500" fill="none" stroke-dasharray="2.500 1.500"/><path d="M6.500 19.500l4 .5M20 18.500l5 .5M29 17.500l3-.5" stroke="#1040e0" stroke-width="1.300" fill="none"/><path d="M5.500 24.500h6l2-1h10l2-1h7" stroke="#f010f0" stroke-width="1.700" fill="none"/><path d="M6.500 27h11l2-1.500h13" stroke="#6a5ac8" stroke-width="1.800" fill="none"/></svg>
<svg class="a" style="left:1361px;top:66px" width="40" height="41" viewBox="0 0 40 41"><rect x="0" y="0" width="3.500" height="31" fill="#4a4a4a"/><path d="M1.700 1v29" stroke="#e8e8e8" stroke-width="1.500" stroke-dasharray="1.500 1.500"/><rect x="36" y="9" width="3.500" height="31" fill="#4a4a4a"/><path d="M37.700 10v29" stroke="#e8e8e8" stroke-width="1.500" stroke-dasharray="1.500 1.500"/><path d="M3.500 2h8l6 6v20l-7 2-2-3-5 1z" fill="#c4c4c4" stroke="#707070" stroke-width=".8"/><path d="M3.500 8h6q3 2 0 4.500h-6M3.500 16h6q3 2 0 4.500h-6M3.500 24h5q3 2 0 4" fill="#f4f4f4" stroke="#606060" stroke-width=".8"/><path d="M36 10h-7l-5 6 3 20 9 3z" fill="#c4c4c4" stroke="#707070" stroke-width=".8"/><path d="M36 14h-5q-3 2.500 0 5h5M36 23h-5q-3 2.500 0 5h5M36 31h-4q-3 2 0 4.500h4" fill="#f4f4f4" stroke="#606060" stroke-width=".8"/><path d="M7 3q8-4 15 0 5 6 4 14 0 8 5 12l5 2-8 9q-8-2-11-10-2-8-3-14-1-7-7-13z" fill="#3a3844" stroke="#1c1a24" stroke-width="1.500"/><path d="M12 12l12-3M15 22l12-3M19 32l11-5" stroke="#1c1a24" stroke-width="1.300"/><path d="M13 5l8-1 3 5-10 2.500zM15 14l9-2 2 7-9 2.500zM18 24l9-2.500 4 6-8 4z" fill="#2a2834" opacity=".8"/></svg>
<svg class="a" style="left:1410px;top:66px" width="40" height="41" viewBox="0 0 40 41"><rect x="0" y="0" width="3.500" height="31" fill="#4a4a4a"/><path d="M1.700 1v29" stroke="#e8e8e8" stroke-width="1.500" stroke-dasharray="1.500 1.500"/><rect x="36" y="9" width="3.500" height="31" fill="#4a4a4a"/><path d="M37.700 10v29" stroke="#e8e8e8" stroke-width="1.500" stroke-dasharray="1.500 1.500"/><path d="M3.500 2h8l6 6v20l-7 2-2-3-5 1z" fill="#c4c4c4" stroke="#707070" stroke-width=".8"/><path d="M3.500 8h6q3 2 0 4.500h-6M3.500 16h6q3 2 0 4.500h-6M3.500 24h5q3 2 0 4" fill="#f4f4f4" stroke="#606060" stroke-width=".8"/><path d="M36 10h-7l-5 6 3 20 9 3z" fill="#c4c4c4" stroke="#707070" stroke-width=".8"/><path d="M36 14h-5q-3 2.500 0 5h5M36 23h-5q-3 2.500 0 5h5M36 31h-4q-3 2 0 4.500h4" fill="#f4f4f4" stroke="#606060" stroke-width=".8"/><path d="M7 3q8-4 15 0 5 6 4 14 0 8 5 12l5 2-8 9q-8-2-11-10-2-8-3-14-1-7-7-13z" fill="#f4f8fc" stroke="#707070" stroke-width="1.500"/><path d="M12 12l12-3M15 22l12-3M19 32l11-5" stroke="#707070" stroke-width="1.300"/><path d="M13 5l8-1 3 5-10 2.500zM15 14l9-2 2 7-9 2.500zM18 24l9-2.500 4 6-8 4z" fill="#dfe8f2" opacity=".8"/></svg>
<svg class="a" style="left:1466px;top:66px" width="40" height="41" viewBox="0 0 40 41"><rect x="0" y="0" width="3.500" height="31" fill="#4a4a4a"/><path d="M1.700 1v29" stroke="#e8e8e8" stroke-width="1.500" stroke-dasharray="1.500 1.500"/><rect x="36" y="9" width="3.500" height="31" fill="#4a4a4a"/><path d="M37.700 10v29" stroke="#e8e8e8" stroke-width="1.500" stroke-dasharray="1.500 1.500"/><path d="M3.500 2h8l6 6v20l-7 2-2-3-5 1z" fill="#c4c4c4" stroke="#707070" stroke-width=".8"/><path d="M3.500 8h6q3 2 0 4.500h-6M3.500 16h6q3 2 0 4.500h-6M3.500 24h5q3 2 0 4" fill="#f4f4f4" stroke="#606060" stroke-width=".8"/><path d="M36 10h-7l-5 6 3 20 9 3z" fill="#c4c4c4" stroke="#707070" stroke-width=".8"/><path d="M36 14h-5q-3 2.500 0 5h5M36 23h-5q-3 2.500 0 5h5M36 31h-4q-3 2 0 4.500h4" fill="#f4f4f4" stroke="#606060" stroke-width=".8"/><path d="M6 1l15-1 5 5-3 9-14 1z" fill="#e81018" stroke="#900" stroke-width=".6"/><path d="M11 15l12-1.500 3 11-11 4z" fill="#10c040" stroke="#086020" stroke-width=".6"/><path d="M16 29l11-4.500 8 7-9 8-6-3z" fill="#2a8af0" stroke="#0a1a90" stroke-width="1.200"/><path d="M19 30l8-3 5 4.500-6 5.500z" fill="#7fd0ff" opacity=".7"/><path d="M23 1l3 4-3 9 3 11 9 6.500" stroke="#1a1a90" stroke-width="1.200" fill="none" stroke-dasharray="1.500 1"/></svg>
<svg class="a" style="left:1515px;top:66px" width="40" height="41" viewBox="0 0 40 41"><rect x="0" y="0" width="3.500" height="31" fill="#4a4a4a"/><path d="M1.700 1v29" stroke="#e8e8e8" stroke-width="1.500" stroke-dasharray="1.500 1.500"/><rect x="36" y="9" width="3.500" height="31" fill="#4a4a4a"/><path d="M37.700 10v29" stroke="#e8e8e8" stroke-width="1.500" stroke-dasharray="1.500 1.500"/><path d="M3.500 2h8l6 6v20l-7 2-2-3-5 1z" fill="#c4c4c4" stroke="#707070" stroke-width=".8"/><path d="M3.500 8h6q3 2 0 4.500h-6M3.500 16h6q3 2 0 4.500h-6M3.500 24h5q3 2 0 4" fill="#f4f4f4" stroke="#606060" stroke-width=".8"/><path d="M36 10h-7l-5 6 3 20 9 3z" fill="#c4c4c4" stroke="#707070" stroke-width=".8"/><path d="M36 14h-5q-3 2.500 0 5h5M36 23h-5q-3 2.500 0 5h5M36 31h-4q-3 2 0 4.500h4" fill="#f4f4f4" stroke="#606060" stroke-width=".8"/><path d="M6 1l15-1 5 5-3 9-14 1z" fill="#e81018" stroke="#900" stroke-width=".6"/><path d="M11 15l12-1.500 3 11-11 4z" fill="#10c040" stroke="#086020" stroke-width=".6"/><path d="M16 29l11-4.500 8 7-9 8-6-3z" fill="#2a8af0" stroke="#0a1a90" stroke-width="1.200"/><path d="M19 30l8-3 5 4.500-6 5.500z" fill="#7fd0ff" opacity=".7"/><path d="M23 1l3 4-3 9 3 11 9 6.500" stroke="#1a1a90" stroke-width="1.200" fill="none" stroke-dasharray="1.500 1"/></svg>
<svg class="a" style="left:1564px;top:67px" width="40" height="39" viewBox="0 0 40 39"><defs><radialGradient id="g63" cx=".5" cy=".5" r=".62"><stop offset="0" stop-color="#ffd0f0"/><stop offset=".1" stop-color="#f060c0"/><stop offset=".22" stop-color="#f8e8ff"/><stop offset=".38" stop-color="#8a3ae0"/><stop offset=".62" stop-color="#3a1470"/><stop offset="1" stop-color="#14061e"/></radialGradient></defs><rect width="40" height="39" fill="url(#g63)"/><g stroke="#c890ff" stroke-width="1" opacity=".45"><path d="M20 19.500L2 2M20 19.500L38 2M20 19.500L2 37M20 19.500L38 37M20 19.500L20 0M20 19.500L20 39M20 19.500L0 19.500M20 19.500L40 19.500M20 19.500L9 0M20 19.500L31 0M20 19.500L9 39M20 19.500L31 39M20 19.500L0 10M20 19.500L40 10M20 19.500L0 29M20 19.500L40 29"/></g><ellipse cx="20" cy="19.500" rx="4" ry="5.500" fill="#f070b8" stroke="#fff" stroke-width="1.500"/></svg>
<div id="tbline" class="a"></div>
<div class="a" style="left:0;top:118px;width:1896px;height:890px;background:#fff"></div>
<div class="a" style="left:0;top:113px;width:3px;height:917px;background:linear-gradient(90deg,#969696 0 1px,#7a7a7a 1px 2px,#c8c8c8 2px 3px)"></div>
<div class="a" style="left:2px;top:194px;width:1894px;height:5px;background:linear-gradient(#a8a8a8 0 1px,#727272 1px 3px,#7e7e7e 3px 4px,#a0a0a0 4px 5px)"></div>
<div class="a" style="left:2px;top:474px;width:1894px;height:6px;background:linear-gradient(#a0a0a0 0 1px,#727272 1px 2px,#808080 2px 3px,#909090 3px 5px,#b0b0b0 5px 6px)"></div>
<div class="a" style="left:1891px;top:113px;width:5px;height:895px;background:#8f8f8f"></div>
<div class="a" style="left:1154px;top:117px;width:2px;height:78px;background:#787878"></div>
<div class="a" style="left:1781px;top:199px;width:2px;height:275px;background:#d2d2d2"></div>
<div class="a" style="left:1783px;top:198px;width:113px;height:277px;background:#8f8f8f"></div>
<div class="a" style="left:1783px;top:198px;width:2px;height:277px;background:#757575"></div>
<div class="a" style="left:1785px;top:198.500px;width:106px;height:127.500px;background:#fff"></div>
<div class="a" style="left:1785px;top:326px;width:106px;height:2px;background:#cccccc"></div>
<div class="a" style="left:1785px;top:328px;width:106px;height:2.500px;background:#707070"></div>
<div class="a" style="left:1159px;top:122px;width:731px;height:70px;background:#ececec"></div>
<div class="a" style="left:1542.500px;top:122px;width:1.500px;height:70px;background:#fff"></div>
<div class="a" style="left:1697.500px;top:122px;width:1.500px;height:70px;background:#fff"></div>
<div class="a" style="left:6px;top:122px;width:1146px;height:70.5px;background:#8e8e8e;"><div class="a" style="left:2px;top:2px;right:2px;bottom:2px;background:#ececec;border-radius:7px 7px 0 0"></div><div class="a" style="left:2px;top:2px;right:2px;height:21px;background:linear-gradient(#eef4fc,#e3eaf5);border-radius:7px 7px 0 0;border-bottom:1px solid #a2a6ac"></div><div class="a dv" style="left:9px;top:2px;font-weight:bold;font-size:14.500px;line-height:20px;color:#4b4640;white-space:nowrap">View</div><div class="a" style="left:3px;top:28px;width:249px;height:28px;background:#fff;border:3px solid;border-color:#6f6f6f #e9e9e9 #f6f6f6 #6f6f6f"></div><div class="a lab" style="left:8px;top:33.500px">Green saturation scale</div><div class="a" style="left:229px;top:31px;width:20px;height:23px;background:#f0f0f0;border:1px solid;border-color:#fff #6f6f6f #6f6f6f #fff;box-shadow:inset -1px -1px 0 #a8a8a8"></div><svg class="a" style="left:233px;top:39px" width="12" height="8"><path d="M1.500 1.500h9l-4.500 5z" fill="#000"/></svg><div class="a" style="left:264px;top:26px;width:840px;height:34px;background:#f0f0f0;border:1px solid;border-color:#c8c8c8 #fafafa #fafafa #b4b4b4"></div><div class="a" style="left:266px;top:26px;font:bold 19.500px/24px 'Liberation Sans',sans-serif;letter-spacing:.36px;white-space:pre;color:#000">Color Space: HDTV Rec709 , White Point: D65, EOTF:  SDR, Power law (black compen<span style="font-weight:normal;letter-spacing:-.5px">...</span></div><div class="a" style="left:1111.500px;top:28px;width:21px;height:15.500px;background:#f2f2f2;border:1px solid;border-color:#fff #6f6f6f #6f6f6f #fff;box-shadow:inset -1px -1px 0 #a8a8a8"></div><div class="a" style="left:1111.500px;top:44.5px;width:21px;height:15.500px;background:#f2f2f2;border:1px solid;border-color:#fff #6f6f6f #6f6f6f #fff;box-shadow:inset -1px -1px 0 #a8a8a8"></div><svg class="a" style="left:1117px;top:32px" width="10" height="25"><path d="M1 6h7l-3.500-4z" fill="#000"/><path d="M1 18h7l-3.500 4z" fill="#000"/></svg></div>
<div class="a" style="left:1159px;top:122px;width:382px;height:70.5px;background:#8e8e8e;"><div class="a" style="left:2px;top:2px;right:2px;bottom:2px;background:#ececec;border-radius:7px 7px 0 0"></div><div class="a" style="left:2px;top:2px;right:2px;height:21px;background:linear-gradient(#eef4fc,#e3eaf5);border-radius:7px 7px 0 0;border-bottom:1px solid #a2a6ac"></div><div class="a dv" style="left:9px;top:2px;font-weight:bold;font-size:14.500px;line-height:20px;color:#4b4640;white-space:nowrap">Sensor</div><div class="a" style="left:4px;top:24px;width:370px;height:18px;background:#f0f0f0"></div><div class="a" style="left:7px;top:46px;width:80px;height:17px;background:#f0f0f0"></div><div class="a lab" style="left:6px;top:23.200px">Simulated sensor</div><div class="a lab" style="left:8px;top:44.500px">Adaptive</div><svg class="a" style="left:140px;top:47px" width="17" height="17"><path d="M1.500 1l13.500 7.500-13.500 7.500z" fill="#86d23c" stroke="#6cbf2a" stroke-width="1"/></svg><svg class="a" style="left:346px;top:43.5px" width="23" height="22" viewBox="0 0 23 22"><defs><linearGradient id="g64" x1="0" y1="0" x2="1" y2="1"><stop offset="0" stop-color="#5f9ae8"/><stop offset="1" stop-color="#1e4fb0"/></linearGradient></defs><path d="M1.500 4l12-3 2.500 15.500-11.500 4z" fill="url(#g64)" stroke="#1a3f98" stroke-width="1"/><path d="M4 6l8-2 1.800 10.500-7.800 2.600z" fill="#dfeafc"/><path d="M6 11l2 3 4-6" stroke="#e8c030" stroke-width="1.600" fill="none"/><path d="M12 13l8-4" stroke="#3a6ed0" stroke-width="2.200"/><circle cx="20.500" cy="8.500" r="1.400" fill="#e04030"/></svg></div>
<div class="a" style="left:1546px;top:122px;width:150px;height:70.5px;background:#8e8e8e;"><div class="a" style="left:2px;top:2px;right:2px;bottom:2px;background:#ececec;border-radius:7px 7px 0 0"></div><div class="a" style="left:2px;top:2px;right:2px;height:21px;background:linear-gradient(#eef4fc,#e3eaf5);border-radius:7px 7px 0 0;border-bottom:1px solid #a2a6ac"></div><div class="a dv" style="left:9px;top:2px;font-weight:bold;font-size:14.500px;line-height:20px;color:#4b4640;white-space:nowrap">Generator</div><div class="a" style="left:3px;top:24px;width:108px;height:21px;background:#f0f0f0"></div><div class="a lab" style="left:4px;top:23px">GDI</div><svg class="a" style="left:121px;top:45.5px" width="23" height="22" viewBox="0 0 23 22"><defs><linearGradient id="g65" x1="0" y1="0" x2="1" y2="1"><stop offset="0" stop-color="#5f9ae8"/><stop offset="1" stop-color="#1e4fb0"/></linearGradient></defs><path d="M1.500 4l12-3 2.500 15.500-11.500 4z" fill="url(#g65)" stroke="#1a3f98" stroke-width="1"/><path d="M4 6l8-2 1.800 10.500-7.800 2.600z" fill="#dfeafc"/><path d="M6 11l2 3 4-6" stroke="#e8c030" stroke-width="1.600" fill="none"/><path d="M12 13l8-4" stroke="#3a6ed0" stroke-width="2.200"/><circle cx="20.500" cy="8.500" r="1.400" fill="#e04030"/></svg></div>
<div class="a" style="left:1701px;top:122px;width:187.5px;height:70.5px;background:#8e8e8e;"><div class="a" style="left:2px;top:2px;right:2px;bottom:2px;background:#ececec;border-radius:7px 7px 0 0"></div><div class="a" style="left:2px;top:2px;right:2px;height:21px;background:linear-gradient(#eef4fc,#e3eaf5);border-radius:7px 7px 0 0;border-bottom:1px solid #a2a6ac"></div><div class="a dv" style="left:9px;top:2px;font-weight:bold;font-size:14.500px;line-height:20px;color:#4b4640;white-space:nowrap">Parameters</div><div class="a" style="left:9px;top:25px;width:122px;height:21px;background:#f0f0f0"></div><div class="a" style="left:9px;top:47px;width:165px;height:21px;background:#f0f0f0"></div><div class="a cb" style="left:12px;top:27.500px"></div><div class="a lab" style="left:35px;top:24px">Reference</div><div class="a cb" style="left:12px;top:48.500px;background:#f0f0f0"></div><div class="a lab" style="left:36px;top:45px;color:#a6a6a6;text-shadow:1px 1px 0 #fff">XYZ Adjustment</div></div>
<div class="a" style="left:6px;top:202.500px;width:1775px;height:270px;background:#8e8e8e"></div>
<div class="a" style="left:8px;top:204.500px;width:1772px;height:267px;background:#ececec;border-radius:7px 7px 0 0"></div>
<div class="a" style="left:8px;top:204.500px;width:1772px;height:18px;background:linear-gradient(#eef4fc,#e6edf7);border-radius:7px 7px 0 0"></div>
<div class="a" style="left:6px;top:472.500px;width:1776px;height:1.500px;background:#e2e2e2"></div>
<div class="a" style="left:7px;top:210px;width:1773px;height:261.500px;border:2px solid #e4e42c;border-top:none"></div>
<div class="a" style="left:7px;top:204.500px;width:8px;height:6px;border:2px solid #e4e42c;border-right:none;border-bottom:none;border-radius:7px 0 0 0"></div>
<div class="a" style="left:1757px;top:223.500px;width:22px;height:1.500px;background:#e4e42c"></div>
<div class="a" style="left:1772px;top:204.500px;width:8px;height:6px;border:2px solid #e4e42c;border-left:none;border-bottom:none;border-radius:0 7px 0 0"></div>
<div class="a dv" style="left:17px;top:207.500px;height:13px;overflow:hidden;font-weight:bold;font-size:11.200px;line-height:16px;color:#4b4640;white-space:nowrap">( Average dE: 2.27 [0.48,1.61,0.91] max: 5.42 [CIE2000] )</div>
<div class="a" style="left:11px;top:220.500px;width:1746px;height:246px;background:#f0f0f0;border:2.500px solid;border-color:#6e6e6e #f0f0f0 #f8f8f8 #6e6e6e"></div>
<div class="g gh" style="left:14px;top:224px;width:66px;height:27px;background:#f0f0f0;line-height:26.500px;"><span>% Sat</span></div>
<div class="g gh" style="left:80px;top:224px;width:336px;height:27px;background:#f0f0f0;line-height:26.500px;"><span>0</span></div>
<div class="g gh" style="left:416px;top:224px;width:328px;height:27px;border-bottom-color:#8a9a8a;background:#bdeeb9;line-height:26.500px;"><span>25</span></div>
<div class="g gh" style="left:744px;top:224px;width:335px;height:27px;border-bottom-color:#8a9a8a;background:#8eec88;line-height:26.500px;"><span>50</span></div>
<div class="g gh" style="left:1079px;top:224px;width:327px;height:27px;border-bottom-color:#8a9a8a;background:#5eec5c;line-height:26.500px;"><span>75</span></div>
<div class="g gh" style="left:1406px;top:224px;width:328px;height:27px;border-bottom-color:#8a9a8a;background:#2eec30;line-height:26.500px;"><span>100</span></div>
<div class="g gh" style="left:14px;top:251px;width:66px;height:32px;background:#f0f0f0;"><span>x</span></div>
<div class="g gv" style="left:80px;top:251px;width:336px;height:32px;background:#fff;"><span>0.3115</span></div>
<div class="g gv" style="left:416px;top:251px;width:328px;height:32px;background:#fff;"><span>0.3125</span></div>
<div class="g gv" style="left:744px;top:251px;width:335px;height:32px;background:#fff;"><span>0.3122</span></div>
<div class="g gv" style="left:1079px;top:251px;width:327px;height:32px;background:#fff;"><span>0.3115</span></div>
<div class="g gv" style="left:1406px;top:251px;width:328px;height:32px;background:#fff;"><span>0.3036</span></div>
<div class="g gh" style="left:14px;top:283px;width:66px;height:31px;background:#f0f0f0;"><span>y</span></div>
<div class="g gv" style="left:80px;top:283px;width:336px;height:31px;background:#fff;"><span>0.3202</span></div>
<div class="g gv" style="left:416px;top:283px;width:328px;height:31px;background:#fff;"><span>0.3945</span></div>
<div class="g gv" style="left:744px;top:283px;width:335px;height:31px;background:#fff;"><span>0.4643</span></div>
<div class="g gv" style="left:1079px;top:283px;width:327px;height:31px;background:#fff;"><span>0.5394</span></div>
<div class="g gv" style="left:1406px;top:283px;width:328px;height:31px;background:#fff;"><span>0.6188</span></div>
<div class="g gh" style="left:14px;top:314px;width:66px;height:31px;background:#f0f0f0;"><span>Y</span></div>
<div class="g gv" style="left:80px;top:314px;width:336px;height:31px;background:#fff;"><span>226.295</span></div>
<div class="g gv" style="left:416px;top:314px;width:328px;height:31px;background:#fff;"><span>226.697</span></div>
<div class="g gv" style="left:744px;top:314px;width:335px;height:31px;background:#fff;"><span>228.602</span></div>
<div class="g gv" style="left:1079px;top:314px;width:327px;height:31px;background:#fff;"><span>230.110</span></div>
<div class="g gv" style="left:1406px;top:314px;width:328px;height:31px;background:#fff;"><span>234.626</span></div>
<div class="g gh" style="left:14px;top:345px;width:66px;height:31px;background:#f0f0f0;"><span>Delta E</span></div>
<div class="g gv" style="left:80px;top:345px;width:336px;height:31px;font-weight:bold;background:#ffabab;"><span>5.4</span></div>
<div class="g gv" style="left:416px;top:345px;width:328px;height:31px;font-weight:bold;background:#aefca6;"><span>1.3</span></div>
<div class="g gv" style="left:744px;top:345px;width:335px;height:31px;font-weight:bold;background:#aefca6;"><span>1.2</span></div>
<div class="g gv" style="left:1079px;top:345px;width:327px;height:31px;font-weight:bold;background:#aefca6;"><span>1.6</span></div>
<div class="g gv" style="left:1406px;top:345px;width:328px;height:31px;font-weight:bold;background:#aefca6;"><span>1.8</span></div>
<div class="g gh" style="left:14px;top:376px;width:66px;height:31px;background:#f0f0f0;"><span>delta xy</span></div>
<div class="g gv" style="left:80px;top:376px;width:336px;height:31px;background:#f0f0f0;"><span>0.0089</span></div>
<div class="g gv" style="left:416px;top:376px;width:328px;height:31px;background:#f0f0f0;"><span>0.0037</span></div>
<div class="g gv" style="left:744px;top:376px;width:335px;height:31px;background:#f0f0f0;"><span>0.0058</span></div>
<div class="g gv" style="left:1079px;top:376px;width:327px;height:31px;background:#f0f0f0;"><span>0.0114</span></div>
<div class="g gv" style="left:1406px;top:376px;width:328px;height:31px;background:#f0f0f0;"><span>0.0191</span></div>
<div class="g gh" style="left:14px;top:407px;width:66px;height:31.5px;background:#f0f0f0;"><span>delta L</span></div>
<div class="g gv" style="left:80px;top:407px;width:336px;height:31.5px;background:#e1e1e1;"><span>-2.8 %</span></div>
<div class="g gv" style="left:416px;top:407px;width:328px;height:31.5px;background:#e1e1e1;"><span>-3.3 %</span></div>
<div class="g gv" style="left:744px;top:407px;width:335px;height:31.5px;background:#e1e1e1;"><span>-2.3 %</span></div>
<div class="g gv" style="left:1079px;top:407px;width:327px;height:31.5px;background:#e1e1e1;"><span>-1.7 %</span></div>
<div class="g gv" style="left:1406px;top:407px;width:328px;height:31.5px;background:#e1e1e1;"><span>+0.7 %</span></div>
<div class="g gh" style="left:14px;top:438.5px;width:66px;height:5px;background:#f0f0f0;border-bottom:none;"></div>
<div class="g gv" style="left:80px;top:438.5px;width:336px;height:5px;background:#f0f0f0;border-bottom:none;"></div>
<div class="g gv" style="left:416px;top:438.5px;width:328px;height:5px;background:#f0f0f0;border-bottom:none;"></div>
<div class="g gv" style="left:744px;top:438.5px;width:335px;height:5px;background:#f0f0f0;border-bottom:none;"></div>
<div class="g gv" style="left:1079px;top:438.5px;width:327px;height:5px;background:#f0f0f0;border-bottom:none;"></div>
<div class="g gv" style="left:1406px;top:438.5px;width:328px;height:5px;background:#f0f0f0;border-bottom:none;"></div>
<div class="a" style="left:1734px;top:223px;width:22px;height:221px;background:#f0f0f0"></div>
<div class="a" style="left:1736px;top:245px;width:18px;height:175px;background:#cdcdcd"></div>
<div class="a" style="left:14px;top:443.500px;width:1742px;height:22px;background:#f0f0f0"></div>
<svg class="a" style="left:0;top:0" width="1920" height="480"><path d="M1740.75 236.9l4.25 -4.8l4.25 4.8" fill="none" stroke="#505050" stroke-width="2.6"/><path d="M1740.75 430.1l4.25 4.8l4.25 -4.8" fill="none" stroke="#505050" stroke-width="2.6"/><path d="M24.9 450.75l-4.8 4.25l4.8 4.25" fill="none" stroke="#c0c0c0" stroke-width="2.4"/><path d="M1721.1 450.75l4.8 4.25l-4.8 4.25" fill="none" stroke="#c0c0c0" stroke-width="2.4"/></svg>
<div class="a" style="left:1789px;top:203px;width:100px;height:122.5px;background:#8e8e8e;"><div class="a" style="left:2px;top:2px;right:2px;bottom:2px;background:#ececec;border-radius:7px 7px 0 0"></div><div class="a" style="left:2px;top:2px;right:2px;height:20.5px;background:linear-gradient(#eef4fc,#e3eaf5);border-radius:7px 7px 0 0;border-bottom:1px solid #a2a6ac"></div><div class="a dv" style="left:9px;top:2px;font-weight:bold;font-size:14.500px;line-height:19.5px;color:#4b4640;white-space:nowrap">Display</div><div class="a" style="left:9px;top:22.5px;width:83px;height:18px;background:#f0f0f0"></div><div class="a rd" style="left:10px;top:24px;background:#f0f0f0;"></div><div class="a lab" style="left:32px;top:21px;color:#a6a6a6;text-shadow:1px 1px 0 #fff;">Sensor</div><div class="a" style="left:9px;top:43px;width:83px;height:18px;background:#f0f0f0"></div><div class="a rd" style="left:10px;top:44.5px;"></div><div class="a lab" style="left:32px;top:41.5px;">RGB</div><div class="a" style="left:9px;top:63px;width:83px;height:18px;background:#f0f0f0"></div><div class="a rd" style="left:10px;top:64.5px;"></div><div class="a lab" style="left:32px;top:61.5px;">XYZ</div><div class="a" style="left:9px;top:83px;width:83px;height:18px;background:#f0f0f0"></div><div class="a rd" style="left:10px;top:84.5px;"></div><div class="a lab" style="left:32px;top:81.5px;">xyz</div><div class="a" style="left:9px;top:102px;width:83px;height:18px;background:#f0f0f0"></div><div class="a rd" style="left:10px;top:103.5px;"></div><div class="a" style="left:14.500px;top:108px;width:4.500px;height:4.500px;border-radius:50%;background:#000"></div><div class="a lab" style="left:32px;top:100.5px;">xyY</div></div>
<div class="a" style="left:1791px;top:205px;width:96px;height:20.500px;background:linear-gradient(#eef4fc,#e3eaf5);border-radius:7px 7px 0 0;border-bottom:1px solid #a2a6ac"></div>
<div class="a dv" style="left:1798px;top:206px;font-weight:bold;font-size:14.500px;line-height:19.500px;color:#4b4640">Display</div>
<div class="a" style="left:1785.500px;top:330.5px;width:103.500px;height:37px;background:#ececec;border:1.500px solid;border-color:#fff #9a9a9a #9a9a9a #fff"></div>
<svg class="a" style="left:1792px;top:334px" width="41" height="33" viewBox="0 0 41 33"><defs><linearGradient id="g66" x1="0" y1="0" x2="1" y2="1"><stop offset="0" stop-color="#18f050"/><stop offset=".6" stop-color="#10d848"/><stop offset="1" stop-color="#10a088"/></linearGradient></defs><rect x=".3" y="0" width="3" height="26.600" fill="#2c2c2c"/><path d="M0 1.500h1.200M0 4.500h1.200M0 7.500h1.200M0 10.500h1.200M0 13.500h1.200M0 16.500h1.200M0 19.500h1.200M0 22.500h1.200M0 25.500h1.200" stroke="#ececec" stroke-width="1.300"/><rect x="37.700" y="4.700" width="3" height="27" fill="#2c2c2c"/><path d="M39.800 6h1.200M39.800 9h1.200M39.800 12h1.200M39.800 15h1.200M39.800 18h1.200M39.800 21h1.200M39.800 24h1.200M39.800 27h1.200M39.800 30h1.200" stroke="#ececec" stroke-width="1.300"/><path d="M3 .5h8l3 4v20l-2 4-9-5z" fill="#b4b4b4" stroke="#6a6a6a" stroke-width=".7"/><path d="M3.300 4.500h5.500q3 2.500 0 4.500h-2q-2 1.500 0 3h2q3 2.500 0 4.500h-5.500M3.300 19.500h4.500q3 2 0 4" fill="#dcdcdc" stroke="#7a7a7a" stroke-width=".7"/><path d="M38 5h-7l-4 4 1 18 10 4z" fill="#b4b4b4" stroke="#6a6a6a" stroke-width=".7"/><path d="M37.700 8.500h-5q-3 2.500 0 4.500h2q2 1.500 0 3h-2q-3 2.500 0 4.500h5M37.700 24h-4q-2.500 2 0 4h4" fill="#dcdcdc" stroke="#7a7a7a" stroke-width=".7"/><path d="M8 .3h18.600q.5 7 .7 12.200 1 4.500 5.200 7.500l5.200 3.600-6.700 8.200h-13.300q-3.700-3-3.700-8.200 0-9-.7-14.800-1-5-5.300-8.500z" fill="url(#g66)" stroke="#0a5a30" stroke-width="1.300"/><path d="M11.500 7.500l15-4.500M13.800 19.500l14-7M16 28l6-8" stroke="#0a5028" stroke-width="1.400" fill="none"/><path d="M15 9.500l10-3 1 6.500-10.500 5zM18 22l7-3.500 6 4.500-6 7h-5z" fill="#40ff70" opacity=".55"/><path d="M10 1.500q3 3.500 3.500 8 .5 6 .5 14 .5 4 3 7M25.500 1.500q.5 6 .8 11 1 5 5.500 8.500l4 2.600" stroke="#0a4a28" stroke-width=".9" fill="none" stroke-dasharray="1.200 1"/></svg>
<div class="a lab" style="left:1849px;top:339px">Go</div>
<div class="a" style="left:1785.500px;top:367.5px;width:103.500px;height:37px;background:#ececec;border:1.500px solid;border-color:#fff #9a9a9a #9a9a9a #fff"></div>
<svg class="a" style="left:1793.5px;top:370.5px" width="37" height="32" viewBox="0 0 37 32"><defs><linearGradient id="g67" x1="0" y1="0" x2="1" y2="1"><stop offset="0" stop-color="#9ccaf6"/><stop offset=".45" stop-color="#dff4ff"/><stop offset="1" stop-color="#8ec4f0"/></linearGradient></defs><path d="M.7 5q8-4 18-3.500t17-1.500l-4 28.600q-10 4-25.200 2.200z" fill="url(#g67)" stroke="#9cc8f0" stroke-width=".8"/><path d="M1 5q8-4 18-3.500t16.500-1.500q-2 5-14 6t-20.500-1z" fill="#7eb8ee" opacity=".75"/><ellipse cx="19" cy="27" rx="12.500" ry="3.800" fill="#f0faff" opacity=".85" transform="rotate(-7 19 27)"/><path d="M31.700 28.600l3.300-24" stroke="#7a8a9a" stroke-width="1.200" opacity=".6"/><path d="M17 15.500q1-5 6.500-5.500 2 0 3.500 1l1.500-2.500 1 7.500-7-1.500 2-1.500q-4-1-5 3.500zM29.500 19q-1 5.500-6.500 6-2.500 0-4-1.500l-1.500 2.500-1-7.500 7 1.500-2 1.800q4 1 5.500-3.800z" fill="#14a424" stroke="#0c7a18" stroke-width=".5"/></svg>
<div class="a lab" style="left:1833.5px;top:376px">Delete</div>
<div class="a" style="left:1785.500px;top:404.5px;width:103.500px;height:38px;background:#ececec;border:1.500px solid;border-color:#fff #9a9a9a #9a9a9a #fff"></div>
<svg class="a" style="left:1792px;top:411px" width="41" height="28" viewBox="0 0 41 28"><polygon points="0,28 0,14 3,11 3,28" fill="#000080"/><polygon points="3,28 3,11 6,8 6,28" fill="#f010f0"/><polygon points="6,28 6,8 8,3 10,8 12,10 12,28" fill="#1010f0"/><polygon points="12,28 12,10 14,8 16,11 16,28" fill="#10f0f0"/><polygon points="16,28 16,11 18,12 20,9 22,4 22,28" fill="#10f010"/><polygon points="22,28 22,4 25,0 27,3 28,5 28,28" fill="#f8f810"/><polygon points="28,28 28,5 30,4 32,10 32,28" fill="#800000"/><polygon points="32,28 32,10 34,13 36,10 38,11 41,13 41,28" fill="#f01010"/><polyline points="0,14 3,11 6,8 8,3 10,8 12,10 14,8 16,11 18,12 20,9 22,4" fill="none" stroke="#f8f810" stroke-width="1.200"/></svg>
<div class="a lab" style="left:1842px;top:413.5px">Refs</div>
<div class="a" style="left:1792px;top:447.500px;width:71px;height:22.500px;background:#f0f0f0"></div>
<div class="a cb" style="left:1794px;top:451px"></div><div class="a lab" style="left:1816px;top:447px">Edit</div>
<div class="a" style="left:1896px;top:115px;width:22px;height:893px;background:#f0f0f0"></div>
<div class="a" style="left:1917px;top:115px;width:3px;height:915px;background:#e8e8e8"></div>
<div class="a" style="left:1898px;top:137px;width:18px;height:822.500px;background:#cdcdcd"></div>
<svg class="a" style="left:1896px;top:115px" width="22" height="893"><path d="M6.75 14.4l4.25 -4.8l4.25 4.8" fill="none" stroke="#505050" stroke-width="2.6"/><path d="M6.75 879.6l4.25 4.8l4.25 -4.8" fill="none" stroke="#505050" stroke-width="2.6"/></svg>
<div class="a" style="left:480px;top:479.500px;width:5px;height:525px;background:linear-gradient(90deg,#808080 0 2.500px,#b8b8b8 2.500px 5px)"></div>
<div class="a" style="left:1891px;top:480px;width:5px;height:524px;background:linear-gradient(90deg,#7c7c7c 0 2px,#b4b4b4 2px 5px)"></div>
<div class="a" style="left:2px;top:1001px;width:1894px;height:3px;background:#808080"></div>
<div class="a" style="left:2px;top:1004px;width:1894px;height:3.200px;background:#b8b8b8"></div>
<div class="a" style="left:2px;top:1007.200px;width:1894px;height:1px;background:#f0f0f0"></div>
<div class="a" style="left:6px;top:484px;width:471.5px;height:515.5px;background:#8e8e8e;"><div class="a" style="left:2px;top:2px;right:2px;bottom:2px;background:#ececec;border-radius:7px 7px 0 0"></div><div class="a" style="left:2px;top:2px;right:2px;height:21.5px;background:linear-gradient(#eef4fc,#e3eaf5);border-radius:7px 7px 0 0;border-bottom:1px solid #a2a6ac"></div><div class="a dv" style="left:9px;top:2px;font-weight:bold;font-size:14.500px;line-height:20.5px;color:#4b4640;white-space:nowrap">Selected color</div><div class="a" style="left:16px;top:27px;width:138px;height:17.5px;background:#f0f0f0;"></div><div class="a lab" style="left:17px;top:25px">RGB Levels</div><div class="a" style="left:282px;top:25px;width:162px;height:18px;background:#f0f0f0;"></div><div class="a lab" style="left:295px;top:23px">Current Measure</div><div class="a" style="left:11.5px;top:57px;width:250px;height:110px;background:#f0f0f0;"></div><div class="a" style="left:11.5px;top:112px;width:250px;height:1.5px;background:transparent;background:repeating-linear-gradient(90deg,#a4a4a4 0 3.100px,transparent 3.100px 6.200px)"></div><svg class="a" style="left:203px;top:150.5px" width="60" height="10" viewBox="0 0 60 10"><path d="M2 8q8-7 28-7t27 5.500v3h-55z" fill="#b8860b" stroke="#000" stroke-width="1"/></svg><div class="a" style="left:11.5px;top:158.5px;width:250px;height:7px;background:#000;"></div><div class="a" style="left:213.5px;top:135.5px;font:bold 15px/16px 'Liberation Serif',serif;white-space:nowrap">dE 0.0</div><div class="a" style="left:14px;top:182px;width:240px;height:93px;background:#f0f0f0;"></div><div class="a dv" style="left:23.5px;top:183px;width:100px;text-align:center;font-weight:bold;font-size:14.500px;line-height:20px">No<br>Measure</div><div class="a dv" style="left:143.5px;top:183px;width:100px;text-align:center;font-weight:bold;font-size:14.500px;line-height:20px">No<br>Measure</div><div class="a" style="left:16px;top:293px;width:43px;height:19px;background:#f0f0f0;"></div><div class="a lab" style="left:17px;top:291.5px">Target</div><div class="a" style="left:56.5px;top:313.5px;width:145px;height:111.500px;border:1px solid #000;border-bottom:none;background:conic-gradient(from 90deg at 50% 50%,#ff0000,#ff0090 12%,#c000c0 20%,#8000d0 27%,#0000ff 37%,#0060d0 45%,#009090 52%,#00ff60 63%,#30ff00 74%,#ffc800 87%,#ff4000 95%,#ff0000)"></div><div class="a" style="left:78px;top:330px;width:102px;height:78.500px;border:1px solid #fff;border-radius:11px;background:#c00000"></div><svg class="a" style="left:78.5px;top:330.5px" width="102" height="79" viewBox="0 0 102 79"><path d="M43.7 35.3A11.7 11.7 0 0 1 45.7 33.7" stroke="#30c060" stroke-width="1.300" fill="none"/><path d="M39.9 33.4A17.55 17.55 0 0 1 43.4 30.6" stroke="#30c060" stroke-width="1.300" fill="none"/><path d="M35.9 31.7A23.4 23.4 0 0 1 41.2 27.4" stroke="#30c060" stroke-width="1.300" fill="none"/><path d="M31.8 30.2A29.25 29.25 0 0 1 39.3 24.1" stroke="#30c060" stroke-width="1.300" fill="none"/><path d="M27.5 28.8A35.1 35.1 0 0 1 37.7 20.7" stroke="#30c060" stroke-width="1.300" fill="none"/><path d="M23.2 27.7A40.95 40.95 0 0 1 36.2 17.2" stroke="#30c060" stroke-width="1.300" fill="none"/><path d="M18.8 26.7A46.8 46.8 0 0 1 35.0 13.7" stroke="#30c060" stroke-width="1.300" fill="none"/><path d="M14.2 25.9A52.65 52.65 0 0 1 34.0 10.1" stroke="#30c060" stroke-width="1.300" fill="none"/><path d="M56.3 33.7A11.7 11.7 0 0 1 58.3 35.3" stroke="#f08a10" stroke-width="1.300" fill="none"/><path d="M58.6 30.6A17.55 17.55 0 0 1 62.1 33.4" stroke="#f08a10" stroke-width="1.300" fill="none"/><path d="M60.8 27.4A23.4 23.4 0 0 1 66.1 31.7" stroke="#f08a10" stroke-width="1.300" fill="none"/><path d="M62.7 24.1A29.25 29.25 0 0 1 70.2 30.2" stroke="#f08a10" stroke-width="1.300" fill="none"/><path d="M64.3 20.7A35.1 35.1 0 0 1 74.5 28.8" stroke="#f08a10" stroke-width="1.300" fill="none"/><path d="M65.8 17.2A40.95 40.95 0 0 1 78.8 27.7" stroke="#f08a10" stroke-width="1.300" fill="none"/><path d="M67.0 13.7A46.8 46.8 0 0 1 83.2 26.7" stroke="#f08a10" stroke-width="1.300" fill="none"/><path d="M68.0 10.1A52.65 52.65 0 0 1 87.8 25.9" stroke="#f08a10" stroke-width="1.300" fill="none"/><path d="M45.7 45.3A11.7 11.7 0 0 1 43.7 43.7" stroke="#3048e0" stroke-width="1.300" fill="none"/><path d="M43.4 48.4A17.55 17.55 0 0 1 39.9 45.6" stroke="#3048e0" stroke-width="1.300" fill="none"/><path d="M41.2 51.6A23.4 23.4 0 0 1 35.9 47.3" stroke="#3048e0" stroke-width="1.300" fill="none"/><path d="M39.3 54.9A29.25 29.25 0 0 1 31.8 48.8" stroke="#3048e0" stroke-width="1.300" fill="none"/><path d="M37.7 58.3A35.1 35.1 0 0 1 27.5 50.2" stroke="#3048e0" stroke-width="1.300" fill="none"/><path d="M36.2 61.8A40.95 40.95 0 0 1 23.2 51.3" stroke="#3048e0" stroke-width="1.300" fill="none"/><path d="M35.0 65.3A46.8 46.8 0 0 1 18.8 52.3" stroke="#3048e0" stroke-width="1.300" fill="none"/><path d="M34.0 68.9A52.65 52.65 0 0 1 14.2 53.1" stroke="#3048e0" stroke-width="1.300" fill="none"/><path d="M58.3 43.7A11.7 11.7 0 0 1 56.3 45.3" stroke="#f01880" stroke-width="1.300" fill="none"/><path d="M62.1 45.6A17.55 17.55 0 0 1 58.6 48.4" stroke="#f01880" stroke-width="1.300" fill="none"/><path d="M66.1 47.3A23.4 23.4 0 0 1 60.8 51.6" stroke="#f01880" stroke-width="1.300" fill="none"/><path d="M70.2 48.8A29.25 29.25 0 0 1 62.7 54.9" stroke="#f01880" stroke-width="1.300" fill="none"/><path d="M74.5 50.2A35.1 35.1 0 0 1 64.3 58.3" stroke="#f01880" stroke-width="1.300" fill="none"/><path d="M78.8 51.3A40.95 40.95 0 0 1 65.8 61.8" stroke="#f01880" stroke-width="1.300" fill="none"/><path d="M83.2 52.3A46.8 46.8 0 0 1 67.0 65.3" stroke="#f01880" stroke-width="1.300" fill="none"/><path d="M87.8 53.1A52.65 52.65 0 0 1 68.0 68.9" stroke="#f01880" stroke-width="1.300" fill="none"/><path d="M45 39.5h12M51 34.5v10" stroke="#000" stroke-width="1"/><circle cx="51" cy="39.5" r="2.500" fill="none" stroke="#fff" stroke-width="1" stroke-dasharray="1 1"/></svg><div class="a" style="left:269px;top:53px;width:191.5px;height:451.5px;background:#f0f0f0;border:2px solid;border-color:#6e6e6e #f4f4f4 #f4f4f4 #6e6e6e"></div><div class="g gh" style="left:271px;top:56px;width:69.5px;height:28.82px;line-height:29.82px;background:#f0f0f0"><span>Y cd/m<sup style="font-size:10px;line-height:0;vertical-align:6px">2</sup></span></div><div class="g gv" style="left:340.5px;top:56px;width:97px;height:28.82px;background:#fff"></div><div class="g gh" style="left:271px;top:84.82px;width:69.5px;height:28.82px;line-height:29.82px;background:#f0f0f0"><span>Y ftL</span></div><div class="g gv" style="left:340.5px;top:84.82px;width:97px;height:28.82px;background:#fff"></div><div class="g gh" style="left:271px;top:113.64px;width:69.5px;height:28.82px;line-height:29.82px;background:#f0f0f0"><span>T°</span></div><div class="g gv" style="left:340.5px;top:113.64px;width:97px;height:28.82px;background:#fff"></div><div class="g gh" style="left:271px;top:142.46px;width:69.5px;height:28.82px;line-height:29.82px;background:#f0f0f0"><span>X</span></div><div class="g gv" style="left:340.5px;top:142.46px;width:97px;height:28.82px;background:#e1e1e1"></div><div class="g gh" style="left:271px;top:171.28px;width:69.5px;height:28.82px;line-height:29.82px;background:#f0f0f0"><span>Y</span></div><div class="g gv" style="left:340.5px;top:171.28px;width:97px;height:28.82px;background:#e1e1e1"></div><div class="g gh" style="left:271px;top:200.1px;width:69.5px;height:28.82px;line-height:29.82px;background:#f0f0f0"><span>Z</span></div><div class="g gv" style="left:340.5px;top:200.1px;width:97px;height:28.82px;background:#e1e1e1"></div><div class="g gh" style="left:271px;top:228.92px;width:69.5px;height:28.82px;line-height:29.82px;background:#f0f0f0"><span>R</span></div><div class="g gv" style="left:340.5px;top:228.92px;width:97px;height:28.82px;background:#fff"></div><div class="g gh" style="left:271px;top:257.74px;width:69.5px;height:28.82px;line-height:29.82px;background:#f0f0f0"><span>G</span></div><div class="g gv" style="left:340.5px;top:257.74px;width:97px;height:28.82px;background:#fff"></div><div class="g gh" style="left:271px;top:286.56px;width:69.5px;height:28.82px;line-height:29.82px;background:#f0f0f0"><span>B</span></div><div class="g gv" style="left:340.5px;top:286.56px;width:97px;height:28.82px;background:#fff"></div><div class="g gh" style="left:271px;top:315.38px;width:69.5px;height:28.82px;line-height:29.82px;background:#f0f0f0"><span>x</span></div><div class="g gv" style="left:340.5px;top:315.38px;width:97px;height:28.82px;background:#e1e1e1"></div><div class="g gh" style="left:271px;top:344.2px;width:69.5px;height:28.82px;line-height:29.82px;background:#f0f0f0"><span>y</span></div><div class="g gv" style="left:340.5px;top:344.2px;width:97px;height:28.82px;background:#e1e1e1"></div><div class="g gh" style="left:271px;top:373.02px;width:69.5px;height:28.82px;line-height:29.82px;background:#f0f0f0"><span>Y</span></div><div class="g gv" style="left:340.5px;top:373.02px;width:97px;height:28.82px;background:#e1e1e1"></div><div class="g gh" style="left:271px;top:401.84px;width:69.5px;height:28.82px;line-height:29.82px;background:#f0f0f0"><span>x</span></div><div class="g gv" style="left:340.5px;top:401.84px;width:97px;height:28.82px;background:#fff"></div><div class="g gh" style="left:271px;top:430.66px;width:69.5px;height:28.82px;line-height:29.82px;background:#f0f0f0"><span>y</span></div><div class="g gv" style="left:340.5px;top:430.66px;width:97px;height:28.82px;background:#fff"></div><div class="g gh" style="left:271px;top:459.48px;width:69.5px;height:28.82px;line-height:29.82px;background:#f0f0f0"><span>z</span></div><div class="g gv" style="left:340.5px;top:459.48px;width:97px;height:28.82px;background:#fff"></div><div class="g gh" style="left:271px;top:488.3px;width:69.5px;height:15.7px;line-height:29.82px;background:#f0f0f0"><span>L</span></div><div class="g gv" style="left:340.5px;top:488.3px;width:97px;height:15.7px;background:#e1e1e1"></div><div class="a" style="left:438.5px;top:55.5px;width:21px;height:448.5px;background:#f0f0f0;"></div><div class="a" style="left:440px;top:77.5px;width:17.5px;height:263px;background:#cdcdcd;"></div><svg class="a" style="left:438.5px;top:55.5px" width="21" height="449"><path d="M5.75 14.4l4.25 -4.8l4.25 4.8" fill="none" stroke="#505050" stroke-width="2.6"/><path d="M5.75 435.6l4.25 4.8l4.25 -4.8" fill="none" stroke="#505050" stroke-width="2.6"/></svg></div>
<div class="a" style="left:489px;top:484px;width:1402px;height:515.5px;background:#8e8e8e;"><div class="a" style="left:2px;top:2px;right:2px;bottom:2px;background:#ececec;border-radius:7px 7px 0 0"></div><div class="a" style="left:2px;top:2px;right:2px;height:21.5px;background:linear-gradient(#eef4fc,#e3eaf5);border-radius:7px 7px 0 0;border-bottom:1px solid #a2a6ac"></div><div class="a dv" style="left:9px;top:2px;font-weight:bold;font-size:14.500px;line-height:20.5px;color:#4b4640;white-space:nowrap">Information</div><div class="a" style="left:5.5px;top:27.5px;width:377.5px;height:28px;background:#fff;border:3.500px solid;border-color:#6f6f6f #e9e9e9 #f6f6f6 #6f6f6f"></div><div class="a" style="left:10.5px;top:32px;width:349.5px;height:20.5px;background:#0078d7;"></div><div class="a lab" style="left:12px;top:31.5px;color:#fff;font-size:15px">RGB - Gamma</div><div class="a" style="left:360.5px;top:31px;width:20.5px;height:22.5px;background:#f0f0f0;border:1px solid;border-color:#fff #6f6f6f #6f6f6f #fff;box-shadow:inset -1px -1px 0 #a8a8a8"></div><svg class="a" style="left:365.5px;top:39px" width="12" height="8"><path d="M1.500 1.500h9l-4.500 5z" fill="#000"/></svg><div class="a" style="left:9px;top:65px;width:693.5px;height:440.5px;background:#fff;border:4px solid;border-color:#6e6e6e #fff #fff #6e6e6e;box-shadow:inset 0 0 0 0 #000"></div><div class="a" style="left:704px;top:65px;width:693px;height:440.5px;background:#fff;border:4px solid;border-color:#6e6e6e #fff #fff #6e6e6e;box-shadow:inset 0 0 0 0 #000"></div></div>
<svg class="a" style="left:502px;top:553.5px" width="686.5" height="432.5" viewBox="0 0 686.5 432.5"><defs><linearGradient id="g68" x1="0" y1="0" x2="1" y2="0"><stop offset="0" stop-color="#1e1e1e"/><stop offset="1" stop-color="#ffffff"/></linearGradient></defs><rect width="686.5" height="432.5" fill="url(#g68)"/><path d="M68.7 0V432.5M137.3 0V432.5M206.0 0V432.5M274.6 0V432.5M343.2 0V432.5M411.9 0V432.5M480.6 0V432.5M549.2 0V432.5M617.9 0V432.5" stroke="#1a4e4e" stroke-width="1.300" fill="none"/><path d="M0 21.7H686.5M0 43.1H686.5M0 64.6H686.5M0 86.0H686.5M0 128.9H686.5M0 150.4H686.5M0 171.8H686.5M0 193.3H686.5M0 258.5H686.5M0 301.9H686.5M0 345.3H686.5M0 388.7H686.5" stroke="#1a4e4e" stroke-width="1.300" fill="none"/><path d="M0 107.5H686.5" stroke="#1a4e4e" stroke-width="1.500"/><path d="M0 107.5H686.5" stroke="#f4f4f4" stroke-width="1.500" stroke-dasharray="4 3"/><rect x="0" y="103.5" width="4" height="8" fill="#fff"/><text x="3" y="17.2" font-size="17" fill="#fff" font-family="Liberation Serif,serif">140%</text><text x="3" y="38.6" font-size="17" fill="#fff" font-family="Liberation Serif,serif">130%</text><text x="3" y="60.1" font-size="17" fill="#fff" font-family="Liberation Serif,serif">120%</text><text x="3" y="81.5" font-size="17" fill="#fff" font-family="Liberation Serif,serif">110%</text><text x="3" y="103.0" font-size="17" fill="#fff" font-family="Liberation Serif,serif">100%</text><text x="3" y="124.4" font-size="17" fill="#fff" font-family="Liberation Serif,serif">90%</text><text x="3" y="145.9" font-size="17" fill="#fff" font-family="Liberation Serif,serif">80%</text><text x="3" y="167.3" font-size="17" fill="#fff" font-family="Liberation Serif,serif">70%</text><text x="3" y="188.8" font-size="17" fill="#fff" font-family="Liberation Serif,serif">60%</text><text x="3.500" y="253.5" font-size="17" fill="#f0f0f0" font-family="Liberation Serif,serif">8</text><text x="3.500" y="296.9" font-size="17" fill="#f0f0f0" font-family="Liberation Serif,serif">6</text><text x="3.500" y="340.3" font-size="17" fill="#f0f0f0" font-family="Liberation Serif,serif">4</text><text x="3.500" y="383.7" font-size="17" fill="#f0f0f0" font-family="Liberation Serif,serif">2</text><text x="71.7" y="211.5" font-size="17" fill="#ffffff" font-family="Liberation Serif,serif">10% White</text><text x="209.0" y="211.5" font-size="17" fill="#c0c0c0" font-family="Liberation Serif,serif">30% White</text><text x="346.2" y="211.5" font-size="17" fill="#848484" font-family="Liberation Serif,serif">50% White</text><text x="483.6" y="211.5" font-size="17" fill="#404040" font-family="Liberation Serif,serif">70% White</text><text x="620.9" y="211.5" font-size="17" fill="#000000" font-family="Liberation Serif,serif">90% White</text><text x="71.7" y="427.5" font-size="17" fill="#ffffff" font-family="Liberation Serif,serif">10% White</text><text x="209.0" y="427.5" font-size="17" fill="#c0c0c0" font-family="Liberation Serif,serif">30% White</text><text x="346.2" y="427.5" font-size="17" fill="#848484" font-family="Liberation Serif,serif">50% White</text><text x="483.6" y="427.5" font-size="17" fill="#404040" font-family="Liberation Serif,serif">70% White</text><text x="620.9" y="427.5" font-size="17" fill="#000000" font-family="Liberation Serif,serif">90% White</text><text x="356" y="17.500" font-size="18" font-weight="bold" fill="#d6d61e" text-anchor="middle" font-family="Liberation Sans,sans-serif">Gray Scale Balance w/gamma</text><text x="480" y="380" font-size="20" font-weight="bold" fill="#8f8f8f" font-family="Liberation Sans,sans-serif">hcfr.sourceforge.net</text><polyline points="34.3,154.1 68.7,168.5 103.0,167.5 137.3,155.5 171.6,152.2 206.0,145.1 240.3,139.1 274.6,138.5 308.9,131.5 343.2,125.5 377.6,120.5 411.9,118.5 446.2,118.9 480.6,115.1 514.9,112.5 549.2,109.1 583.5,105.5 617.9,105.5 652.2,102.5 686.5,111.5" fill="none" stroke="#00ff00" stroke-width="2.200"/><rect x="29.3" y="149.1" width="10" height="10" fill="#00ff00"/><rect x="63.7" y="163.5" width="10" height="10" fill="#00ff00"/><rect x="98.0" y="162.5" width="10" height="10" fill="#00ff00"/><rect x="132.3" y="150.5" width="10" height="10" fill="#00ff00"/><rect x="166.6" y="147.2" width="10" height="10" fill="#00ff00"/><rect x="201.0" y="140.1" width="10" height="10" fill="#00ff00"/><rect x="235.3" y="134.1" width="10" height="10" fill="#00ff00"/><rect x="269.6" y="133.5" width="10" height="10" fill="#00ff00"/><rect x="303.9" y="126.5" width="10" height="10" fill="#00ff00"/><rect x="338.2" y="120.5" width="10" height="10" fill="#00ff00"/><rect x="372.6" y="115.5" width="10" height="10" fill="#00ff00"/><rect x="406.9" y="113.5" width="10" height="10" fill="#00ff00"/><rect x="441.2" y="113.9" width="10" height="10" fill="#00ff00"/><rect x="475.6" y="110.1" width="10" height="10" fill="#00ff00"/><rect x="509.9" y="107.5" width="10" height="10" fill="#00ff00"/><rect x="544.2" y="104.1" width="10" height="10" fill="#00ff00"/><rect x="578.5" y="100.5" width="10" height="10" fill="#00ff00"/><rect x="612.9" y="100.5" width="10" height="10" fill="#00ff00"/><rect x="647.2" y="97.5" width="10" height="10" fill="#00ff00"/><rect x="681.5" y="106.5" width="10" height="10" fill="#00ff00"/><polyline points="34.3,146.5 68.7,157.5 103.0,159.0 137.3,144.5 171.6,137.5 206.0,133.5 240.3,125.5 274.6,124.1 308.9,117.5 343.2,112.5 377.6,109.1 411.9,103.5 446.2,106.5 480.6,100.5 514.9,100.1 549.2,95.5 583.5,91.5 617.9,92.5 652.2,90.5 686.5,99.0" fill="none" stroke="#ff0000" stroke-width="2.200"/><rect x="29.3" y="141.5" width="10" height="10" fill="#ff0000"/><rect x="63.7" y="152.5" width="10" height="10" fill="#ff0000"/><rect x="98.0" y="154.0" width="10" height="10" fill="#ff0000"/><rect x="132.3" y="139.5" width="10" height="10" fill="#ff0000"/><rect x="166.6" y="132.5" width="10" height="10" fill="#ff0000"/><rect x="201.0" y="128.5" width="10" height="10" fill="#ff0000"/><rect x="235.3" y="120.5" width="10" height="10" fill="#ff0000"/><rect x="269.6" y="119.1" width="10" height="10" fill="#ff0000"/><rect x="303.9" y="112.5" width="10" height="10" fill="#ff0000"/><rect x="338.2" y="107.5" width="10" height="10" fill="#ff0000"/><rect x="372.6" y="104.1" width="10" height="10" fill="#ff0000"/><rect x="406.9" y="98.5" width="10" height="10" fill="#ff0000"/><rect x="441.2" y="101.5" width="10" height="10" fill="#ff0000"/><rect x="475.6" y="95.5" width="10" height="10" fill="#ff0000"/><rect x="509.9" y="95.1" width="10" height="10" fill="#ff0000"/><rect x="544.2" y="90.5" width="10" height="10" fill="#ff0000"/><rect x="578.5" y="86.5" width="10" height="10" fill="#ff0000"/><rect x="612.9" y="87.5" width="10" height="10" fill="#ff0000"/><rect x="647.2" y="85.5" width="10" height="10" fill="#ff0000"/><rect x="681.5" y="94.0" width="10" height="10" fill="#ff0000"/><polyline points="34.3,109.1 68.7,166.5 103.0,165.5 137.3,149.5 171.6,144.0 206.0,135.5 240.3,127.5 274.6,126.5 308.9,120.5 343.2,114.0 377.6,108.5 411.9,102.5 446.2,101.5 480.6,98.5 514.9,95.5 549.2,90.5 583.5,85.5 617.9,87.0 652.2,84.0 686.5,91.5" fill="none" stroke="#0000ff" stroke-width="2.200"/><rect x="29.3" y="104.1" width="10" height="10" fill="#0000ff"/><rect x="63.7" y="161.5" width="10" height="10" fill="#0000ff"/><rect x="98.0" y="160.5" width="10" height="10" fill="#0000ff"/><rect x="132.3" y="144.5" width="10" height="10" fill="#0000ff"/><rect x="166.6" y="139.0" width="10" height="10" fill="#0000ff"/><rect x="201.0" y="130.5" width="10" height="10" fill="#0000ff"/><rect x="235.3" y="122.5" width="10" height="10" fill="#0000ff"/><rect x="269.6" y="121.5" width="10" height="10" fill="#0000ff"/><rect x="303.9" y="115.5" width="10" height="10" fill="#0000ff"/><rect x="338.2" y="109.0" width="10" height="10" fill="#0000ff"/><rect x="372.6" y="103.5" width="10" height="10" fill="#0000ff"/><rect x="406.9" y="97.5" width="10" height="10" fill="#0000ff"/><rect x="441.2" y="96.5" width="10" height="10" fill="#0000ff"/><rect x="475.6" y="93.5" width="10" height="10" fill="#0000ff"/><rect x="509.9" y="90.5" width="10" height="10" fill="#0000ff"/><rect x="544.2" y="85.5" width="10" height="10" fill="#0000ff"/><rect x="578.5" y="80.5" width="10" height="10" fill="#0000ff"/><rect x="612.9" y="82.0" width="10" height="10" fill="#0000ff"/><rect x="647.2" y="79.0" width="10" height="10" fill="#0000ff"/><rect x="681.5" y="86.5" width="10" height="10" fill="#0000ff"/><polyline points="34.3,422.5 68.7,409.0 103.0,389.1 137.3,383.5 171.6,374.1 206.0,368.5 240.3,364.0 274.6,356.5 308.9,356.5 343.2,365.1 377.6,361.5 411.9,346.5 446.2,335.1 480.6,331.5 514.9,325.5 549.2,317.5 583.5,312.5 617.9,310.5 652.2,308.5 686.5,305.1" fill="none" stroke="#ff00ff" stroke-width="2.200"/><rect x="29.3" y="417.5" width="10" height="10" fill="#ff00ff"/><rect x="63.7" y="404.0" width="10" height="10" fill="#ff00ff"/><rect x="98.0" y="384.1" width="10" height="10" fill="#ff00ff"/><rect x="132.3" y="378.5" width="10" height="10" fill="#ff00ff"/><rect x="166.6" y="369.1" width="10" height="10" fill="#ff00ff"/><rect x="201.0" y="363.5" width="10" height="10" fill="#ff00ff"/><rect x="235.3" y="359.0" width="10" height="10" fill="#ff00ff"/><rect x="269.6" y="351.5" width="10" height="10" fill="#ff00ff"/><rect x="303.9" y="351.5" width="10" height="10" fill="#ff00ff"/><rect x="338.2" y="360.1" width="10" height="10" fill="#ff00ff"/><rect x="372.6" y="356.5" width="10" height="10" fill="#ff00ff"/><rect x="406.9" y="341.5" width="10" height="10" fill="#ff00ff"/><rect x="441.2" y="330.1" width="10" height="10" fill="#ff00ff"/><rect x="475.6" y="326.5" width="10" height="10" fill="#ff00ff"/><rect x="509.9" y="320.5" width="10" height="10" fill="#ff00ff"/><rect x="544.2" y="312.5" width="10" height="10" fill="#ff00ff"/><rect x="578.5" y="307.5" width="10" height="10" fill="#ff00ff"/><rect x="612.9" y="305.5" width="10" height="10" fill="#ff00ff"/><rect x="647.2" y="303.5" width="10" height="10" fill="#ff00ff"/><rect x="681.5" y="300.1" width="10" height="10" fill="#ff00ff"/></svg>
<svg class="a" style="left:1196.5px;top:553.5px" width="686.5" height="432.5" viewBox="0 0 686.5 432.5"><defs><linearGradient id="g69" x1="0" y1="0" x2="1" y2="0"><stop offset="0" stop-color="#1e1e1e"/><stop offset="1" stop-color="#ffffff"/></linearGradient></defs><rect width="686.5" height="432.5" fill="url(#g69)"/><path d="M68.7 0V432.5M137.3 0V432.5M206.0 0V432.5M274.6 0V432.5M343.2 0V432.5M411.9 0V432.5M480.6 0V432.5M549.2 0V432.5M617.9 0V432.5" stroke="#1a4e4e" stroke-width="1.300" fill="none"/><path d="M0 21.2H686.5M0 42.6H686.5M0 64.1H686.5M0 85.5H686.5M0 107.0H686.5M0 128.4H686.5M0 149.9H686.5M0 171.3H686.5M0 192.8H686.5M0 214.2H686.5M0 235.7H686.5M0 257.1H686.5M0 278.6H686.5M0 300.0H686.5M0 321.5H686.5M0 342.9H686.5M0 364.4H686.5M0 385.8H686.5M0 407.3H686.5" stroke="#1a4e4e" stroke-width="1.300" fill="none"/><text x="4" y="16.7" font-size="17" fill="#fff" font-family="Liberation Serif,serif">2.9</text><text x="4" y="38.1" font-size="17" fill="#fff" font-family="Liberation Serif,serif">2.8</text><text x="4" y="59.6" font-size="17" fill="#fff" font-family="Liberation Serif,serif">2.7</text><text x="4" y="81.0" font-size="17" fill="#fff" font-family="Liberation Serif,serif">2.6</text><text x="4" y="102.5" font-size="17" fill="#fff" font-family="Liberation Serif,serif">2.5</text><text x="4" y="123.9" font-size="17" fill="#fff" font-family="Liberation Serif,serif">2.4</text><text x="4" y="145.4" font-size="17" fill="#fff" font-family="Liberation Serif,serif">2.3</text><text x="4" y="166.8" font-size="17" fill="#fff" font-family="Liberation Serif,serif">2.2</text><text x="4" y="188.3" font-size="17" fill="#fff" font-family="Liberation Serif,serif">2.1</text><text x="4" y="209.7" font-size="17" fill="#fff" font-family="Liberation Serif,serif">2</text><text x="4" y="231.2" font-size="17" fill="#fff" font-family="Liberation Serif,serif">1.9</text><text x="4" y="252.6" font-size="17" fill="#fff" font-family="Liberation Serif,serif">1.8</text><text x="4" y="274.1" font-size="17" fill="#fff" font-family="Liberation Serif,serif">1.7</text><text x="4" y="295.5" font-size="17" fill="#fff" font-family="Liberation Serif,serif">1.6</text><text x="4" y="317.0" font-size="17" fill="#fff" font-family="Liberation Serif,serif">1.5</text><text x="4" y="338.4" font-size="17" fill="#fff" font-family="Liberation Serif,serif">1.4</text><text x="4" y="359.9" font-size="17" fill="#fff" font-family="Liberation Serif,serif">1.3</text><text x="4" y="381.3" font-size="17" fill="#fff" font-family="Liberation Serif,serif">1.2</text><text x="4" y="402.8" font-size="17" fill="#fff" font-family="Liberation Serif,serif">1.1</text><text x="71.7" y="427.5" font-size="17" fill="#ffffff" font-family="Liberation Serif,serif">10% White</text><text x="209.0" y="427.5" font-size="17" fill="#c0c0c0" font-family="Liberation Serif,serif">30% White</text><text x="346.2" y="427.5" font-size="17" fill="#848484" font-family="Liberation Serif,serif">50% White</text><text x="483.6" y="427.5" font-size="17" fill="#404040" font-family="Liberation Serif,serif">70% White</text><text x="620.9" y="427.5" font-size="17" fill="#000000" font-family="Liberation Serif,serif">90% White</text><text x="358" y="17.500" font-size="18" font-weight="bold" fill="#d6d61e" text-anchor="middle" font-family="Liberation Sans,sans-serif">EOTF(Gamma)</text><text x="480" y="380" font-size="20" font-weight="bold" fill="#8f8f8f" font-family="Liberation Sans,sans-serif">hcfr.sourceforge.net</text><path d="M34.3 172.0H652.2" stroke="#eee" stroke-width="1.500" stroke-dasharray="3 3"/><rect x="29.3" y="167.0" width="10" height="10" fill="#e2e2e2"/><rect x="63.7" y="167.0" width="10" height="10" fill="#e2e2e2"/><rect x="98.0" y="167.0" width="10" height="10" fill="#e2e2e2"/><rect x="132.3" y="167.0" width="10" height="10" fill="#e2e2e2"/><rect x="166.6" y="167.0" width="10" height="10" fill="#e2e2e2"/><rect x="201.0" y="167.0" width="10" height="10" fill="#e2e2e2"/><rect x="235.3" y="167.0" width="10" height="10" fill="#e2e2e2"/><rect x="269.6" y="167.0" width="10" height="10" fill="#e2e2e2"/><rect x="303.9" y="167.0" width="10" height="10" fill="#e2e2e2"/><rect x="338.2" y="167.0" width="10" height="10" fill="#e2e2e2"/><rect x="372.6" y="167.0" width="10" height="10" fill="#e2e2e2"/><rect x="406.9" y="167.0" width="10" height="10" fill="#e2e2e2"/><rect x="441.2" y="167.0" width="10" height="10" fill="#e2e2e2"/><rect x="475.6" y="167.0" width="10" height="10" fill="#e2e2e2"/><rect x="509.9" y="167.0" width="10" height="10" fill="#e2e2e2"/><rect x="544.2" y="167.0" width="10" height="10" fill="#e2e2e2"/><rect x="578.5" y="167.0" width="10" height="10" fill="#e2e2e2"/><rect x="612.9" y="167.0" width="10" height="10" fill="#e2e2e2"/><rect x="647.2" y="167.0" width="10" height="10" fill="#e2e2e2"/><polyline points="34.3,145.0 68.7,138.5 103.0,135.5 137.3,139.5 171.6,139.5 206.0,139.5 240.3,143.5 274.6,143.1 308.9,146.2 343.2,150.0 377.6,156.5 411.9,160.8 446.2,155.5 480.6,162.3 514.9,167.3 549.2,184.7 583.5,214.9 617.9,234.2 652.2,351.8" fill="none" stroke="#ffff00" stroke-width="2.200"/><rect x="29.3" y="140.0" width="10" height="10" fill="#ffff00"/><rect x="63.7" y="133.5" width="10" height="10" fill="#ffff00"/><rect x="98.0" y="130.5" width="10" height="10" fill="#ffff00"/><rect x="132.3" y="134.5" width="10" height="10" fill="#ffff00"/><rect x="166.6" y="134.5" width="10" height="10" fill="#ffff00"/><rect x="201.0" y="134.5" width="10" height="10" fill="#ffff00"/><rect x="235.3" y="138.5" width="10" height="10" fill="#ffff00"/><rect x="269.6" y="138.1" width="10" height="10" fill="#ffff00"/><rect x="303.9" y="141.2" width="10" height="10" fill="#ffff00"/><rect x="338.2" y="145.0" width="10" height="10" fill="#ffff00"/><rect x="372.6" y="151.5" width="10" height="10" fill="#ffff00"/><rect x="406.9" y="155.8" width="10" height="10" fill="#ffff00"/><rect x="441.2" y="150.5" width="10" height="10" fill="#ffff00"/><rect x="475.6" y="157.3" width="10" height="10" fill="#ffff00"/><rect x="509.9" y="162.3" width="10" height="10" fill="#ffff00"/><rect x="544.2" y="179.7" width="10" height="10" fill="#ffff00"/><rect x="578.5" y="209.9" width="10" height="10" fill="#ffff00"/><rect x="612.9" y="229.2" width="10" height="10" fill="#ffff00"/><rect x="647.2" y="346.8" width="10" height="10" fill="#ffff00"/></svg>
<div class="a" style="left:0;top:1008px;width:1896px;height:22px;background:#f0f0f0"></div>
<div class="a" style="left:24px;top:1009.500px;width:1811px;height:18px;background:#cdcdcd"></div>
<svg class="a" style="left:0;top:1008px" width="1896" height="22"><path d="M15.4 6.25l-4.8 4.25l4.8 4.25" fill="none" stroke="#505050" stroke-width="2.6"/><path d="M1883.6 6.25l4.8 4.25l-4.8 4.25" fill="none" stroke="#505050" stroke-width="2.6"/></svg>
<div class="a" style="left:1896px;top:1008px;width:24px;height:22px;background:#f0f0f0"></div>
<div class="a" style="left:0;top:1030px;width:1920px;height:2px;background:#fff"></div>
<div class="a" style="left:0;top:1032px;width:1920px;height:24.500px;background:#f0f0f0"></div>
<div class="a" style="left:0;top:1032px;width:1920px;height:1.500px;background:#3c3c3c"></div>
<svg class="a" style="left:0;top:1032px" width="420" height="25" viewBox="0 0 420 25"><rect x="0" y="0" width="67" height="24" fill="#000"/><rect x="1.500" y="2" width="19.500" height="20" fill="#f0f0f0"/><rect x="23" y="2" width="19.500" height="20" fill="#f0f0f0"/><rect x="44.500" y="2" width="20.500" height="20" fill="#f0f0f0"/><path d="M1.500 22v-20h19.500M23 22v-20h19.500M44.500 22v-20h20" stroke="#fff" stroke-width="1" fill="none"/><path d="M20.500 2.500v19.500h-19M42 2.500v19.500h-19M64.500 2.500v19.500h-20" stroke="#a0a0a0" stroke-width="1" fill="none"/><path d="M7 7.500l9 9M16 7.500l-9 9" stroke="#000" stroke-width="1.600"/><path d="M35 7.500v9.500l-5-4.750z" fill="#000"/><path d="M52 7.500v9.500l5-4.750z" fill="#000"/><path d="M154.700 11.500l3.700 11.100h76l4.600-11.100M233.400 .5l10.350 22.100h55.250l4.750-11.100M298.100 .5l10.300 22.100h83.500l10.300-22.100" stroke="#1a1a1a" stroke-width="1.200" fill="none"/><path d="M68 0l10.750 22.600h70.850l10.700-22.600z" fill="#fff"/><path d="M68.400 .5l10.350 22.100h70.850l10.700-22.100" stroke="#1a1a1a" stroke-width="1.200" fill="none"/><text x="83.400" y="16.500" font-family="Liberation Sans,sans-serif" font-weight="bold" font-size="13.300">Measures</text><text x="167.500" y="16" font-family="Liberation Sans,sans-serif" font-size="11.500">Luminance</text><text x="250.300" y="16" font-family="Liberation Sans,sans-serif" font-size="11.500">Gamma</text><text x="318.500" y="16" font-family="Liberation Sans,sans-serif" font-size="11.500">RGB Levels</text></svg>
<svg class="a" style="left:1708px;top:1035px" width="19" height="18" viewBox="0 0 19 18"><path d="M1 1h17v9l-2 7h-4l-1-3-2 3h-5l-3-7z" fill="#8a8a10" stroke="#000" stroke-width="1.200"/><path d="M4 5q3-3 7 0M8 3h5v5h-5z" stroke="#f01010" stroke-width="1.500" fill="#fff"/><path d="M11 11h6l-1 5h-4z" fill="#f8f810"/></svg>
<div class="a cb" style="left:1828px;top:1036px;width:14.500px;height:14.500px"></div>
<div class="a" style="left:1850px;top:1034.500px;font-size:14px;line-height:18px">Reference</div>
<div class="a" style="left:0;top:1056.500px;width:1920px;height:21.500px;background:linear-gradient(90deg,#e2eaf5,#edf2fa 60%,#f0f4fb)"></div>
<div class="a" style="left:3px;top:1060px;font-size:15px;line-height:19px;color:#111">Ready</div>
<div class="a" style="left:1698px;top:1058px;width:93px;height:21px;border:1px solid;border-color:#aebfd6 #f6f9fd #f6f9fd #aebfd6;border-bottom:none"></div>
<div class="a" style="left:1795.5px;top:1058px;width:35px;height:21px;border:1px solid;border-color:#aebfd6 #f6f9fd #f6f9fd #aebfd6;border-bottom:none"></div>
<div class="a" style="left:1834px;top:1058px;width:42px;height:21px;border:1px solid;border-color:#aebfd6 #f6f9fd #f6f9fd #aebfd6;border-bottom:none"></div>
<div class="a" style="left:1879.5px;top:1058px;width:45px;height:21px;border:1px solid;border-color:#aebfd6 #f6f9fd #f6f9fd #aebfd6;border-bottom:none"></div>
<div class="a" style="left:1837px;top:1059.500px;font-size:15px;line-height:19px;color:#111">NUM</div>
<div class="a" style="left:0;top:1078px;width:1920px;height:2px;background:#4a4a4a"></div>
</body></html>
